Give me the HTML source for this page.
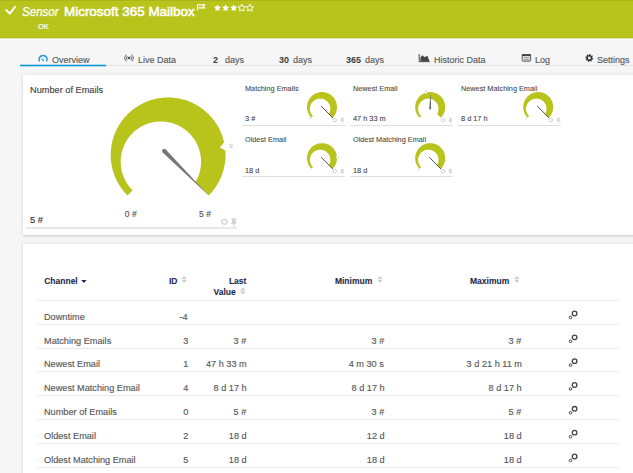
<!DOCTYPE html>
<html><head><meta charset="utf-8"><style>
html,body{margin:0;padding:0;}
body{width:633px;height:473px;overflow:hidden;position:relative;background:#f6f6f6;font-family:"Liberation Sans",sans-serif;}
.t{position:absolute;white-space:nowrap;}
.t{-webkit-text-stroke:0.15px currentColor;}
svg{position:absolute;left:0;top:0;}
</style></head><body>
<div style="position:absolute;left:0px;top:0px;width:633px;height:38px;background:#b8c41c;"></div>
<div style="position:absolute;left:0px;top:0px;width:633px;height:1px;background:#abb61a;"></div>
<div style="position:absolute;left:0px;top:37px;width:633px;height:1px;background:#b3be12;"></div>
<div style="position:absolute;left:0px;top:38px;width:633px;height:1px;background:#e2e6bd;"></div>
<div style="position:absolute;left:0px;top:39px;width:633px;height:1px;background:#fafafa;"></div>
<div class="t" style="left:21.70px;top:4.96px;font-size:12.3px;line-height:14.76px;color:#fff;font-weight:normal;font-style:italic;transform:scaleX(0.94);transform-origin:left 50%;-webkit-text-stroke:0.25px #fff;">Sensor</div>
<div class="t" style="left:64.00px;top:3.97px;font-size:13.45px;line-height:16.14px;color:#fff;font-weight:normal;font-style:normal;-webkit-text-stroke:0.55px #fff;">Microsoft 365 Mailbox</div>
<div class="t" style="left:37.70px;top:22.13px;font-size:8px;line-height:9.6px;color:#fff;font-weight:normal;font-style:normal;transform:scaleX(0.93);transform-origin:left 50%;-webkit-text-stroke:0.2px #fff;">OK</div>
<div style="position:absolute;left:106px;top:65px;width:527px;height:1px;background:#e4e4e4;"></div>
<div class="t" style="left:51.70px;top:53.71px;font-size:9.5px;line-height:11.4px;color:#595959;font-weight:normal;font-style:normal;transform:scaleX(0.947);transform-origin:left 50%;">Overview</div>
<div class="t" style="left:137.70px;top:53.71px;font-size:9.5px;line-height:11.4px;color:#595959;font-weight:normal;font-style:normal;transform:scaleX(0.947);transform-origin:left 50%;">Live Data</div>
<div class="t" style="left:212.90px;top:53.81px;font-size:9.5px;line-height:11.4px;color:#3a3a3a;font-weight:bold;font-style:normal;transform:scaleX(0.94);transform-origin:left 50%;-webkit-text-stroke:0;">2</div>
<div class="t" style="left:224.60px;top:53.71px;font-size:9.5px;line-height:11.4px;color:#595959;font-weight:normal;font-style:normal;transform:scaleX(0.947);transform-origin:left 50%;">days</div>
<div class="t" style="left:278.80px;top:53.81px;font-size:9.5px;line-height:11.4px;color:#3a3a3a;font-weight:bold;font-style:normal;transform:scaleX(0.94);transform-origin:left 50%;-webkit-text-stroke:0;">30</div>
<div class="t" style="left:292.70px;top:53.71px;font-size:9.5px;line-height:11.4px;color:#595959;font-weight:normal;font-style:normal;transform:scaleX(0.947);transform-origin:left 50%;">days</div>
<div class="t" style="left:346.30px;top:53.81px;font-size:9.5px;line-height:11.4px;color:#3a3a3a;font-weight:bold;font-style:normal;transform:scaleX(0.94);transform-origin:left 50%;-webkit-text-stroke:0;">365</div>
<div class="t" style="left:364.60px;top:53.71px;font-size:9.5px;line-height:11.4px;color:#595959;font-weight:normal;font-style:normal;transform:scaleX(0.947);transform-origin:left 50%;">days</div>
<div class="t" style="left:433.80px;top:53.71px;font-size:9.5px;line-height:11.4px;color:#595959;font-weight:normal;font-style:normal;transform:scaleX(0.947);transform-origin:left 50%;">Historic Data</div>
<div class="t" style="left:534.70px;top:53.71px;font-size:9.5px;line-height:11.4px;color:#595959;font-weight:normal;font-style:normal;transform:scaleX(0.947);transform-origin:left 50%;">Log</div>
<div class="t" style="left:597.40px;top:53.71px;font-size:9.5px;line-height:11.4px;color:#595959;font-weight:normal;font-style:normal;transform:scaleX(0.947);transform-origin:left 50%;">Settings</div>
<div style="position:absolute;left:23px;top:75px;width:625px;height:160px;background:#fff;box-shadow:0 0 5px rgba(0,0,0,0.07), 0 1px 2px rgba(0,0,0,0.14);"></div>
<div class="t" style="left:29.70px;top:84.07px;font-size:9.75px;line-height:11.7px;color:#444;font-weight:normal;font-style:normal;transform:scaleX(0.944);transform-origin:left 50%;">Number of Emails</div>
<div class="t" style="left:124.80px;top:208.96px;font-size:8.6px;line-height:10.32px;color:#555;font-weight:normal;font-style:normal;">0 #</div>
<div class="t" style="left:199.10px;top:208.96px;font-size:8.6px;line-height:10.32px;color:#555;font-weight:normal;font-style:normal;">5 #</div>
<div class="t" style="left:30.00px;top:214.80px;font-size:9.3px;line-height:11.16px;color:#333;font-weight:normal;font-style:normal;">5 #</div>
<div style="position:absolute;left:26.3px;top:227px;width:211.2px;height:2px;background:#e8e8e8;"></div>
<div class="t" style="left:245.20px;top:84.22px;font-size:7.8px;line-height:9.36px;color:#454545;font-weight:normal;font-style:normal;transform:scaleX(0.936);transform-origin:left 50%;-webkit-text-stroke:0.08px #454545;">Matching Emails</div>
<div class="t" style="left:245.20px;top:113.93px;font-size:8.0px;line-height:9.6px;color:#3a3a3a;font-weight:normal;font-style:normal;transform:scaleX(0.92);transform-origin:left 50%;-webkit-text-stroke:0.08px #3a3a3a;">3 #</div>
<div style="position:absolute;left:241.5px;top:125px;width:103.7px;height:1px;background:#e0e0e0;"></div>
<div class="t" style="left:353.40px;top:84.22px;font-size:7.8px;line-height:9.36px;color:#454545;font-weight:normal;font-style:normal;transform:scaleX(0.936);transform-origin:left 50%;-webkit-text-stroke:0.08px #454545;">Newest Email</div>
<div class="t" style="left:353.40px;top:113.93px;font-size:8.0px;line-height:9.6px;color:#3a3a3a;font-weight:normal;font-style:normal;transform:scaleX(0.92);transform-origin:left 50%;-webkit-text-stroke:0.08px #3a3a3a;">47 h 33 m</div>
<div style="position:absolute;left:349.7px;top:125px;width:103.7px;height:1px;background:#e0e0e0;"></div>
<div class="t" style="left:461.40px;top:84.22px;font-size:7.8px;line-height:9.36px;color:#454545;font-weight:normal;font-style:normal;transform:scaleX(0.936);transform-origin:left 50%;-webkit-text-stroke:0.08px #454545;">Newest Matching Email</div>
<div class="t" style="left:461.40px;top:113.93px;font-size:8.0px;line-height:9.6px;color:#3a3a3a;font-weight:normal;font-style:normal;transform:scaleX(0.92);transform-origin:left 50%;-webkit-text-stroke:0.08px #3a3a3a;">8 d 17 h</div>
<div style="position:absolute;left:457.7px;top:125px;width:103.7px;height:1px;background:#e0e0e0;"></div>
<div class="t" style="left:245.20px;top:135.32px;font-size:7.8px;line-height:9.36px;color:#454545;font-weight:normal;font-style:normal;transform:scaleX(0.936);transform-origin:left 50%;-webkit-text-stroke:0.08px #454545;">Oldest Email</div>
<div class="t" style="left:245.20px;top:165.63px;font-size:8.0px;line-height:9.6px;color:#3a3a3a;font-weight:normal;font-style:normal;transform:scaleX(0.92);transform-origin:left 50%;-webkit-text-stroke:0.08px #3a3a3a;">18 d</div>
<div style="position:absolute;left:241.5px;top:176px;width:103.7px;height:1px;background:#e0e0e0;"></div>
<div class="t" style="left:353.40px;top:135.32px;font-size:7.8px;line-height:9.36px;color:#454545;font-weight:normal;font-style:normal;transform:scaleX(0.936);transform-origin:left 50%;-webkit-text-stroke:0.08px #454545;">Oldest Matching Email</div>
<div class="t" style="left:353.40px;top:165.63px;font-size:8.0px;line-height:9.6px;color:#3a3a3a;font-weight:normal;font-style:normal;transform:scaleX(0.92);transform-origin:left 50%;-webkit-text-stroke:0.08px #3a3a3a;">18 d</div>
<div style="position:absolute;left:349.7px;top:176px;width:103.7px;height:1px;background:#e0e0e0;"></div>
<div style="position:absolute;left:23px;top:244px;width:625px;height:240px;background:#fff;box-shadow:0 0 5px rgba(0,0,0,0.07), 0 1px 2px rgba(0,0,0,0.14);"></div>
<div class="t" style="left:44.20px;top:275.95px;font-size:8.5px;line-height:10.2px;color:#1c2a4e;font-weight:bold;font-style:normal;-webkit-text-stroke:0.08px #1c2a4e;">Channel</div>
<div class="t" style="right:455.50px;top:276.05px;font-size:8.5px;line-height:10.2px;color:#1c2a4e;font-weight:bold;font-style:normal;-webkit-text-stroke:0.08px #1c2a4e;">ID</div>
<div class="t" style="right:386.60px;top:276.05px;font-size:8.5px;line-height:10.2px;color:#1c2a4e;font-weight:bold;font-style:normal;-webkit-text-stroke:0.08px #1c2a4e;">Last</div>
<div class="t" style="right:397.30px;top:287.35px;font-size:8.5px;line-height:10.2px;color:#1c2a4e;font-weight:bold;font-style:normal;-webkit-text-stroke:0.08px #1c2a4e;">Value</div>
<div class="t" style="left:334.90px;top:276.05px;font-size:8.5px;line-height:10.2px;color:#1c2a4e;font-weight:bold;font-style:normal;-webkit-text-stroke:0.08px #1c2a4e;">Minimum</div>
<div class="t" style="left:470.00px;top:276.05px;font-size:8.5px;line-height:10.2px;color:#1c2a4e;font-weight:bold;font-style:normal;-webkit-text-stroke:0.08px #1c2a4e;">Maximum</div>
<div style="position:absolute;left:36.8px;top:300px;width:582.7px;height:1px;background:#e9e9e9;"></div>
<div style="position:absolute;left:36.8px;top:324px;width:582.7px;height:1px;background:#e9e9e9;"></div>
<div style="position:absolute;left:36.8px;top:348px;width:582.7px;height:1px;background:#e9e9e9;"></div>
<div style="position:absolute;left:36.8px;top:371px;width:582.7px;height:1px;background:#e9e9e9;"></div>
<div style="position:absolute;left:36.8px;top:395px;width:582.7px;height:1px;background:#e9e9e9;"></div>
<div style="position:absolute;left:36.8px;top:419px;width:582.7px;height:1px;background:#e9e9e9;"></div>
<div style="position:absolute;left:36.8px;top:443px;width:582.7px;height:1px;background:#e9e9e9;"></div>
<div style="position:absolute;left:36.8px;top:467px;width:582.7px;height:1px;background:#e9e9e9;"></div>
<div class="t" style="left:43.90px;top:310.71px;font-size:9.6px;line-height:11.52px;color:#585858;font-weight:normal;font-style:normal;transform:scaleX(0.955);transform-origin:left 50%;">Downtime</div>
<div class="t" style="right:445.10px;top:310.71px;font-size:9.6px;line-height:11.52px;color:#585858;font-weight:normal;font-style:normal;transform:scaleX(0.955);transform-origin:right 50%;">-4</div>
<div class="t" style="left:43.90px;top:334.54px;font-size:9.6px;line-height:11.52px;color:#585858;font-weight:normal;font-style:normal;transform:scaleX(0.955);transform-origin:left 50%;">Matching Emails</div>
<div class="t" style="right:445.10px;top:334.54px;font-size:9.6px;line-height:11.52px;color:#585858;font-weight:normal;font-style:normal;transform:scaleX(0.955);transform-origin:right 50%;">3</div>
<div class="t" style="right:386.70px;top:334.54px;font-size:9.6px;line-height:11.52px;color:#585858;font-weight:normal;font-style:normal;transform:scaleX(0.955);transform-origin:right 50%;">3 #</div>
<div class="t" style="right:248.80px;top:334.54px;font-size:9.6px;line-height:11.52px;color:#585858;font-weight:normal;font-style:normal;transform:scaleX(0.955);transform-origin:right 50%;">3 #</div>
<div class="t" style="right:111.30px;top:334.54px;font-size:9.6px;line-height:11.52px;color:#585858;font-weight:normal;font-style:normal;transform:scaleX(0.955);transform-origin:right 50%;">3 #</div>
<div class="t" style="left:43.90px;top:358.37px;font-size:9.6px;line-height:11.52px;color:#585858;font-weight:normal;font-style:normal;transform:scaleX(0.955);transform-origin:left 50%;">Newest Email</div>
<div class="t" style="right:445.10px;top:358.37px;font-size:9.6px;line-height:11.52px;color:#585858;font-weight:normal;font-style:normal;transform:scaleX(0.955);transform-origin:right 50%;">1</div>
<div class="t" style="right:386.70px;top:358.37px;font-size:9.6px;line-height:11.52px;color:#585858;font-weight:normal;font-style:normal;transform:scaleX(0.955);transform-origin:right 50%;">47 h 33 m</div>
<div class="t" style="right:248.80px;top:358.37px;font-size:9.6px;line-height:11.52px;color:#585858;font-weight:normal;font-style:normal;transform:scaleX(0.955);transform-origin:right 50%;">4 m 30 s</div>
<div class="t" style="right:111.30px;top:358.37px;font-size:9.6px;line-height:11.52px;color:#585858;font-weight:normal;font-style:normal;transform:scaleX(0.955);transform-origin:right 50%;">3 d 21 h 11 m</div>
<div class="t" style="left:43.90px;top:382.20px;font-size:9.6px;line-height:11.52px;color:#585858;font-weight:normal;font-style:normal;transform:scaleX(0.955);transform-origin:left 50%;">Newest Matching Email</div>
<div class="t" style="right:445.10px;top:382.20px;font-size:9.6px;line-height:11.52px;color:#585858;font-weight:normal;font-style:normal;transform:scaleX(0.955);transform-origin:right 50%;">4</div>
<div class="t" style="right:386.70px;top:382.20px;font-size:9.6px;line-height:11.52px;color:#585858;font-weight:normal;font-style:normal;transform:scaleX(0.955);transform-origin:right 50%;">8 d 17 h</div>
<div class="t" style="right:248.80px;top:382.20px;font-size:9.6px;line-height:11.52px;color:#585858;font-weight:normal;font-style:normal;transform:scaleX(0.955);transform-origin:right 50%;">8 d 17 h</div>
<div class="t" style="right:111.30px;top:382.20px;font-size:9.6px;line-height:11.52px;color:#585858;font-weight:normal;font-style:normal;transform:scaleX(0.955);transform-origin:right 50%;">8 d 17 h</div>
<div class="t" style="left:43.90px;top:406.03px;font-size:9.6px;line-height:11.52px;color:#585858;font-weight:normal;font-style:normal;transform:scaleX(0.955);transform-origin:left 50%;">Number of Emails</div>
<div class="t" style="right:445.10px;top:406.03px;font-size:9.6px;line-height:11.52px;color:#585858;font-weight:normal;font-style:normal;transform:scaleX(0.955);transform-origin:right 50%;">0</div>
<div class="t" style="right:386.70px;top:406.03px;font-size:9.6px;line-height:11.52px;color:#585858;font-weight:normal;font-style:normal;transform:scaleX(0.955);transform-origin:right 50%;">5 #</div>
<div class="t" style="right:248.80px;top:406.03px;font-size:9.6px;line-height:11.52px;color:#585858;font-weight:normal;font-style:normal;transform:scaleX(0.955);transform-origin:right 50%;">3 #</div>
<div class="t" style="right:111.30px;top:406.03px;font-size:9.6px;line-height:11.52px;color:#585858;font-weight:normal;font-style:normal;transform:scaleX(0.955);transform-origin:right 50%;">5 #</div>
<div class="t" style="left:43.90px;top:429.86px;font-size:9.6px;line-height:11.52px;color:#585858;font-weight:normal;font-style:normal;transform:scaleX(0.955);transform-origin:left 50%;">Oldest Email</div>
<div class="t" style="right:445.10px;top:429.86px;font-size:9.6px;line-height:11.52px;color:#585858;font-weight:normal;font-style:normal;transform:scaleX(0.955);transform-origin:right 50%;">2</div>
<div class="t" style="right:386.70px;top:429.86px;font-size:9.6px;line-height:11.52px;color:#585858;font-weight:normal;font-style:normal;transform:scaleX(0.955);transform-origin:right 50%;">18 d</div>
<div class="t" style="right:248.80px;top:429.86px;font-size:9.6px;line-height:11.52px;color:#585858;font-weight:normal;font-style:normal;transform:scaleX(0.955);transform-origin:right 50%;">12 d</div>
<div class="t" style="right:111.30px;top:429.86px;font-size:9.6px;line-height:11.52px;color:#585858;font-weight:normal;font-style:normal;transform:scaleX(0.955);transform-origin:right 50%;">18 d</div>
<div class="t" style="left:43.90px;top:453.69px;font-size:9.6px;line-height:11.52px;color:#585858;font-weight:normal;font-style:normal;transform:scaleX(0.955);transform-origin:left 50%;">Oldest Matching Email</div>
<div class="t" style="right:445.10px;top:453.69px;font-size:9.6px;line-height:11.52px;color:#585858;font-weight:normal;font-style:normal;transform:scaleX(0.955);transform-origin:right 50%;">5</div>
<div class="t" style="right:386.70px;top:453.69px;font-size:9.6px;line-height:11.52px;color:#585858;font-weight:normal;font-style:normal;transform:scaleX(0.955);transform-origin:right 50%;">18 d</div>
<div class="t" style="right:248.80px;top:453.69px;font-size:9.6px;line-height:11.52px;color:#585858;font-weight:normal;font-style:normal;transform:scaleX(0.955);transform-origin:right 50%;">18 d</div>
<div class="t" style="right:111.30px;top:453.69px;font-size:9.6px;line-height:11.52px;color:#585858;font-weight:normal;font-style:normal;transform:scaleX(0.955);transform-origin:right 50%;">18 d</div>
<svg width="633" height="473" viewBox="0 0 633 473">
<path d="M6.2,10 L9.8,13.6 L15.1,6.75" fill="none" stroke="#fff" stroke-width="1.9" stroke-linecap="round" stroke-linejoin="round"/>
<path d="M197.5,10.6 V4.5 M197.5,4.9 H204.6 L203.3,6.4 L204.6,7.9 H197.5" fill="none" stroke="#fff" stroke-width="1.15"/>
<path d="M217.50,4.20 L218.62,6.46 L221.11,6.83 L219.31,8.59 L219.73,11.07 L217.50,9.90 L215.27,11.07 L215.69,8.59 L213.89,6.83 L216.38,6.46Z" fill="#fff"/>
<path d="M225.60,4.20 L226.72,6.46 L229.21,6.83 L227.41,8.59 L227.83,11.07 L225.60,9.90 L223.37,11.07 L223.79,8.59 L221.99,6.83 L224.48,6.46Z" fill="#fff"/>
<path d="M233.70,4.20 L234.82,6.46 L237.31,6.83 L235.51,8.59 L235.93,11.07 L233.70,9.90 L231.47,11.07 L231.89,8.59 L230.09,6.83 L232.58,6.46Z" fill="#fff"/>
<path d="M241.80,4.20 L242.92,6.46 L245.41,6.83 L243.61,8.59 L244.03,11.07 L241.80,9.90 L239.57,11.07 L239.99,8.59 L238.19,6.83 L240.68,6.46Z" fill="none" stroke="#fff" stroke-width="1.0" stroke-linejoin="round"/>
<path d="M249.90,4.20 L251.02,6.46 L253.51,6.83 L251.71,8.59 L252.13,11.07 L249.90,9.90 L247.67,11.07 L248.09,8.59 L246.29,6.83 L248.78,6.46Z" fill="none" stroke="#fff" stroke-width="1.0" stroke-linejoin="round"/>
<rect x="20" y="64.7" width="86" height="1.6" fill="#0c96d6"/>
<path d="M39.5,61.5 A4.1,4.1 0 1 1 46.7,61.5" fill="none" stroke="#1a9ad6" stroke-width="1.5"/>
<line x1="41.5" y1="58.8" x2="43.9" y2="60.8" stroke="#1a9ad6" stroke-width="1.2"/>
<circle cx="129" cy="58" r="1.15" fill="#444"/>
<path d="M127.4,56.1 A2.6,2.6 0 0 0 127.4,59.9 M130.6,56.1 A2.6,2.6 0 0 1 130.6,59.9" fill="none" stroke="#555" stroke-width="0.9"/>
<path d="M126.4,54.6 A4.3,4.3 0 0 0 126.4,61.4 M131.6,54.6 A4.3,4.3 0 0 1 131.6,61.4" fill="none" stroke="#555" stroke-width="0.9"/>
<path d="M419.2,54 V61.7 H429.8" fill="none" stroke="#444" stroke-width="1"/>
<path d="M420.4,61.2 L420.4,57.5 L422.4,55.2 L424.6,57.2 L425.6,56.6 L427.5,56 L429.5,61.2 Z" fill="#444"/>
<rect x="522.2" y="54.6" width="8.4" height="6.6" fill="#dcdcdc" stroke="#5a5a5a" stroke-width="1" rx="0.6"/>
<rect x="522" y="54.2" width="8.8" height="1.8" fill="#444"/>
<path d="M524,57.6 H528.8 M524,59.5 H528.8" stroke="#8a8a8a" stroke-width="0.8"/>
<path d="M593.38,58.40 L593.22,59.19 L591.90,59.39 L591.58,59.87 L591.90,61.17 L591.23,61.62 L590.16,60.82 L589.59,60.94 L588.90,62.08 L588.11,61.92 L587.91,60.60 L587.43,60.28 L586.13,60.60 L585.68,59.93 L586.48,58.86 L586.36,58.29 L585.22,57.60 L585.38,56.81 L586.70,56.61 L587.02,56.13 L586.70,54.83 L587.37,54.38 L588.44,55.18 L589.01,55.06 L589.70,53.92 L590.49,54.08 L590.69,55.40 L591.17,55.72 L592.47,55.40 L592.92,56.07 L592.12,57.14 L592.24,57.71Z M590.73,58.00 A1.43,1.43 0 1 0 587.87,58.00 A1.43,1.43 0 1 0 590.73,58.00Z" fill="#333" fill-rule="evenodd"/>
<path d="M127.51,195.49 L126.98,194.95 L126.46,194.41 L125.95,193.86 L125.44,193.31 L124.94,192.75 L124.45,192.18 L123.97,191.60 L123.49,191.02 L123.02,190.44 L122.56,189.84 L122.11,189.24 L121.66,188.64 L121.22,188.03 L120.80,187.41 L120.37,186.79 L119.96,186.16 L119.56,185.53 L119.16,184.89 L118.77,184.25 L118.39,183.60 L118.02,182.95 L117.66,182.29 L117.30,181.63 L116.96,180.96 L116.62,180.29 L116.29,179.61 L115.97,178.93 L115.66,178.25 L115.36,177.56 L115.07,176.87 L114.79,176.17 L114.51,175.47 L114.25,174.77 L113.99,174.06 L113.75,173.35 L113.51,172.64 L113.28,171.92 L113.06,171.20 L112.86,170.48 L112.66,169.76 L112.47,169.03 L112.29,168.30 L112.12,167.57 L111.95,166.83 L111.80,166.10 L111.66,165.36 L111.53,164.62 L111.41,163.88 L111.29,163.14 L111.19,162.39 L111.10,161.65 L111.01,160.90 L110.94,160.15 L110.88,159.40 L110.82,158.65 L110.78,157.90 L110.74,157.15 L110.72,156.40 L110.70,155.65 L110.70,154.90 L110.70,154.15 L110.72,153.40 L110.74,152.65 L110.78,151.90 L110.82,151.15 L110.88,150.40 L110.94,149.65 L111.01,148.90 L111.10,148.15 L111.19,147.41 L111.29,146.66 L111.41,145.92 L111.53,145.18 L111.66,144.44 L111.80,143.70 L111.95,142.97 L112.12,142.23 L112.29,141.50 L112.47,140.77 L112.66,140.04 L112.86,139.32 L113.06,138.60 L113.28,137.88 L113.51,137.16 L113.75,136.45 L113.99,135.74 L114.25,135.03 L114.51,134.33 L114.79,133.63 L115.07,132.93 L115.36,132.24 L115.66,131.55 L115.97,130.87 L116.29,130.19 L116.62,129.51 L116.96,128.84 L117.30,128.17 L117.66,127.51 L118.02,126.85 L118.39,126.20 L118.77,125.55 L119.16,124.91 L119.56,124.27 L119.96,123.64 L120.37,123.01 L120.80,122.39 L121.22,121.77 L121.66,121.16 L122.11,120.56 L122.56,119.96 L123.02,119.36 L123.49,118.78 L123.97,118.20 L124.45,117.62 L124.94,117.05 L125.44,116.49 L125.95,115.94 L126.46,115.39 L126.98,114.85 L127.51,114.31 L128.05,113.78 L128.59,113.26 L129.14,112.75 L129.69,112.24 L130.25,111.74 L130.82,111.25 L131.40,110.77 L131.98,110.29 L132.56,109.82 L133.16,109.36 L133.76,108.91 L134.36,108.46 L134.97,108.02 L135.59,107.60 L136.21,107.17 L136.84,106.76 L137.47,106.36 L138.11,105.96 L138.75,105.57 L139.40,105.19 L140.05,104.82 L140.71,104.46 L141.37,104.10 L142.04,103.76 L142.71,103.42 L143.39,103.09 L144.07,102.77 L144.75,102.46 L145.44,102.16 L146.13,101.87 L146.83,101.59 L147.53,101.31 L148.23,101.05 L148.94,100.79 L149.65,100.55 L150.36,100.31 L151.08,100.08 L151.80,99.86 L152.52,99.66 L153.24,99.46 L153.97,99.27 L154.70,99.09 L155.43,98.92 L156.17,98.75 L156.90,98.60 L157.64,98.46 L158.38,98.33 L159.12,98.21 L159.86,98.09 L160.61,97.99 L161.35,97.90 L162.10,97.81 L162.85,97.74 L163.60,97.68 L164.35,97.62 L165.10,97.58 L165.85,97.54 L166.60,97.52 L167.35,97.50 L168.10,97.50 L168.85,97.50 L169.60,97.52 L170.35,97.54 L171.10,97.58 L171.85,97.62 L172.60,97.68 L173.35,97.74 L174.10,97.81 L174.85,97.90 L175.59,97.99 L176.34,98.09 L177.08,98.21 L177.82,98.33 L178.56,98.46 L179.30,98.60 L180.03,98.75 L180.77,98.92 L181.50,99.09 L182.23,99.27 L182.96,99.46 L183.68,99.66 L184.40,99.86 L185.12,100.08 L185.84,100.31 L186.55,100.55 L187.26,100.79 L187.97,101.05 L188.67,101.31 L189.37,101.59 L190.07,101.87 L190.76,102.16 L191.45,102.46 L192.13,102.77 L192.81,103.09 L193.49,103.42 L194.16,103.76 L194.83,104.10 L195.49,104.46 L196.15,104.82 L196.80,105.19 L197.45,105.57 L198.09,105.96 L198.73,106.36 L199.36,106.76 L199.99,107.17 L200.61,107.60 L201.23,108.02 L201.84,108.46 L202.44,108.91 L203.04,109.36 L203.64,109.82 L204.22,110.29 L204.80,110.77 L205.38,111.25 L205.95,111.74 L206.51,112.24 L207.06,112.75 L207.61,113.26 L208.15,113.78 L208.69,114.31 L209.22,114.85 L209.74,115.39 L210.25,115.94 L210.76,116.49 L211.26,117.05 L211.75,117.62 L212.23,118.20 L212.71,118.78 L213.18,119.36 L213.64,119.96 L214.09,120.56 L214.54,121.16 L214.98,121.77 L215.40,122.39 L215.83,123.01 L216.24,123.64 L216.64,124.27 L217.04,124.91 L217.43,125.55 L217.81,126.20 L218.18,126.85 L218.54,127.51 L218.90,128.17 L219.24,128.84 L219.58,129.51 L219.91,130.19 L220.23,130.87 L220.54,131.55 L220.84,132.24 L221.13,132.93 L221.41,133.63 L221.69,134.33 L221.95,135.03 L222.21,135.74 L222.45,136.45 L222.69,137.16 L222.92,137.88 L223.14,138.60 L223.34,139.32 L223.54,140.04 L223.73,140.77 L223.91,141.50 L224.08,142.23 L223.52,143.12 L222.76,144.03 L221.98,144.91 L221.19,145.78 L220.39,146.62 L219.94,147.38 L220.96,147.94 L221.97,148.52 L222.97,149.13 L223.96,149.77 L224.95,150.43 L225.38,151.15 L225.42,151.90 L225.46,152.65 L225.48,153.40 L225.50,154.15 L225.50,154.90 L225.50,155.65 L225.48,156.40 L225.46,157.15 L225.42,157.90 L225.38,158.65 L225.32,159.40 L225.26,160.15 L225.19,160.90 L225.10,161.65 L225.01,162.39 L224.91,163.14 L224.79,163.88 L224.67,164.62 L224.54,165.36 L224.40,166.10 L224.25,166.83 L224.08,167.57 L223.91,168.30 L223.73,169.03 L223.54,169.76 L223.34,170.48 L223.14,171.20 L222.92,171.92 L222.69,172.64 L222.45,173.35 L222.21,174.06 L221.95,174.77 L221.69,175.47 L221.41,176.17 L221.13,176.87 L220.84,177.56 L220.54,178.25 L220.23,178.93 L219.91,179.61 L219.58,180.29 L219.24,180.96 L218.90,181.63 L218.54,182.29 L218.18,182.95 L217.81,183.60 L217.43,184.25 L217.04,184.89 L216.64,185.53 L216.24,186.16 L215.83,186.79 L215.40,187.41 L214.98,188.03 L214.54,188.64 L214.09,189.24 L213.64,189.84 L213.18,190.44 L212.71,191.02 L212.23,191.60 L211.75,192.18 L211.26,192.75 L210.76,193.31 L210.25,193.86 L209.74,194.41 L209.22,194.95 L208.69,195.49 L195.41,182.21 L195.67,181.76 L195.93,181.30 L196.17,180.85 L196.42,180.40 L196.65,179.94 L196.88,179.48 L197.11,179.03 L197.32,178.57 L197.53,178.10 L197.74,177.64 L197.94,177.18 L198.13,176.72 L198.31,176.25 L198.49,175.79 L198.66,175.32 L198.82,174.85 L198.98,174.39 L199.14,173.92 L199.28,173.45 L199.42,172.98 L199.56,172.52 L199.68,172.05 L199.81,171.58 L199.92,171.11 L200.03,170.65 L200.14,170.18 L200.23,169.71 L200.33,169.25 L200.41,168.78 L200.49,168.32 L200.57,167.85 L200.64,167.39 L200.70,166.93 L200.76,166.47 L200.81,166.00 L200.86,165.54 L200.90,165.09 L200.94,164.63 L200.97,164.17 L201.00,163.71 L201.02,163.26 L201.03,162.81 L201.04,162.35 L201.05,161.90 L201.05,161.45 L201.04,161.01 L201.03,160.56 L201.02,160.11 L201.00,159.67 L200.97,159.23 L200.94,158.79 L200.91,158.35 L200.87,157.91 L200.83,157.48 L200.78,157.04 L200.73,156.61 L200.67,156.18 L200.61,155.75 L200.54,155.32 L200.47,154.90 L200.40,154.48 L200.32,154.06 L200.24,153.64 L200.15,153.22 L200.06,152.81 L199.96,152.39 L199.86,151.98 L199.76,151.57 L199.65,151.17 L199.54,150.76 L199.42,150.36 L199.30,149.96 L199.18,149.56 L199.05,149.16 L198.92,148.77 L198.78,148.38 L198.65,147.99 L198.50,147.60 L198.36,147.22 L198.21,146.83 L198.05,146.45 L197.90,146.07 L197.74,145.70 L197.57,145.32 L197.40,144.95 L197.23,144.58 L197.06,144.22 L196.88,143.85 L196.70,143.49 L196.51,143.13 L196.33,142.77 L196.13,142.42 L195.94,142.07 L195.74,141.72 L195.54,141.37 L195.34,141.02 L195.13,140.68 L194.92,140.34 L194.70,140.00 L194.49,139.67 L194.26,139.33 L194.04,139.00 L193.81,138.68 L193.59,138.35 L193.35,138.03 L193.12,137.71 L192.88,137.39 L192.64,137.07 L192.39,136.76 L192.14,136.45 L191.89,136.14 L191.64,135.84 L191.38,135.54 L191.12,135.24 L190.86,134.94 L190.60,134.64 L190.33,134.35 L190.06,134.06 L189.78,133.78 L189.51,133.49 L189.23,133.21 L188.95,132.93 L188.66,132.66 L188.37,132.38 L188.08,132.11 L187.79,131.85 L187.49,131.58 L187.19,131.32 L186.89,131.06 L186.59,130.80 L186.28,130.55 L185.97,130.30 L185.66,130.05 L185.34,129.81 L185.03,129.57 L184.71,129.33 L184.38,129.09 L184.06,128.86 L183.73,128.63 L183.40,128.40 L183.06,128.18 L182.73,127.96 L182.39,127.74 L182.05,127.53 L181.70,127.32 L181.36,127.11 L181.01,126.90 L180.65,126.70 L180.30,126.50 L179.94,126.31 L179.58,126.12 L179.22,125.93 L178.86,125.74 L178.49,125.56 L178.12,125.39 L177.75,125.21 L177.37,125.04 L176.99,124.87 L176.62,124.71 L176.23,124.55 L175.85,124.39 L175.46,124.24 L175.07,124.09 L174.68,123.94 L174.29,123.80 L173.89,123.66 L173.49,123.53 L173.09,123.40 L172.69,123.27 L172.28,123.15 L171.87,123.03 L171.46,122.92 L171.05,122.80 L170.63,122.70 L170.22,122.60 L169.80,122.50 L169.38,122.40 L168.95,122.32 L168.53,122.23 L168.10,122.15 L167.67,122.07 L167.24,122.00 L166.80,121.93 L166.37,121.87 L165.93,121.81 L165.49,121.76 L165.05,121.71 L164.61,121.67 L164.16,121.63 L163.72,121.59 L163.27,121.56 L162.82,121.54 L162.36,121.52 L161.91,121.51 L161.46,121.50 L161.00,121.49 L160.54,121.49 L160.08,121.50 L159.62,121.51 L159.16,121.53 L158.69,121.55 L158.23,121.58 L157.76,121.61 L157.30,121.65 L156.83,121.70 L156.36,121.75 L155.89,121.80 L155.42,121.86 L154.95,121.93 L154.47,122.01 L154.00,122.08 L153.53,122.17 L153.05,122.26 L152.58,122.36 L152.10,122.46 L151.63,122.57 L151.15,122.69 L150.68,122.81 L150.20,122.94 L149.72,123.07 L149.25,123.21 L148.77,123.36 L148.29,123.51 L147.82,123.67 L147.34,123.84 L146.87,124.01 L146.40,124.19 L145.92,124.38 L145.45,124.57 L144.98,124.77 L144.51,124.97 L144.04,125.19 L143.57,125.41 L143.10,125.63 L142.64,125.87 L142.17,126.11 L141.71,126.35 L141.25,126.61 L140.79,126.87 L140.34,127.14 L139.88,127.41 L139.43,127.69 L138.98,127.98 L138.53,128.27 L138.08,128.58 L137.64,128.89 L137.20,129.20 L136.76,129.53 L136.33,129.86 L135.90,130.19 L135.47,130.54 L135.05,130.89 L134.63,131.24 L134.21,131.61 L133.80,131.98 L133.39,132.36 L132.98,132.74 L132.58,133.14 L132.19,133.53 L131.79,133.94 L131.41,134.35 L131.02,134.77 L130.65,135.19 L130.27,135.63 L129.91,136.06 L129.54,136.51 L129.19,136.96 L128.83,137.42 L128.49,137.88 L128.15,138.35 L127.81,138.83 L127.49,139.31 L127.16,139.80 L126.85,140.29 L126.54,140.79 L126.24,141.30 L125.94,141.81 L125.65,142.33 L125.37,142.85 L125.10,143.38 L124.83,143.91 L124.57,144.45 L124.31,144.99 L124.07,145.54 L123.83,146.09 L123.60,146.65 L123.38,147.22 L123.16,147.78 L122.96,148.35 L122.76,148.93 L122.57,149.51 L122.39,150.10 L122.22,150.68 L122.06,151.28 L121.90,151.87 L121.76,152.47 L121.62,153.07 L121.49,153.68 L121.37,154.29 L121.26,154.90 L121.16,155.51 L121.07,156.13 L120.99,156.75 L120.92,157.37 L120.86,158.00 L120.80,158.62 L120.76,159.25 L120.73,159.88 L120.70,160.51 L120.69,161.14 L120.69,161.77 L120.69,162.41 L120.71,163.04 L120.74,163.68 L120.77,164.31 L120.82,164.95 L120.88,165.59 L120.95,166.22 L121.02,166.86 L121.11,167.49 L121.21,168.12 L121.32,168.76 L121.44,169.39 L121.56,170.02 L121.70,170.65 L121.85,171.28 L122.01,171.90 L122.18,172.53 L122.36,173.15 L122.55,173.77 L122.75,174.38 L122.96,175.00 L123.18,175.61 L123.41,176.22 L123.65,176.82 L123.90,177.42 L124.16,178.02 L124.43,178.61 L124.71,179.20 L125.00,179.78 L125.30,180.36 L125.61,180.94 L125.93,181.51 L126.25,182.08 L126.59,182.64 L126.94,183.19 L127.29,183.74 L127.65,184.29 L128.03,184.82 L128.41,185.36 L128.80,185.88 L129.20,186.40 L129.61,186.92 L130.02,187.42 L130.45,187.92 L130.88,188.41 L131.32,188.90 L131.77,189.38 L132.22,189.85 L132.69,190.31Z" fill="#b8c41c"/>
<path d="M162.69,152.53 L208.69,195.49 L165.73,149.49Z" fill="#767676"/>
<circle cx="164.21" cy="151.01" r="2.15" fill="#767676"/>
<path d="M229.2,144.3 H232.9 M229.6,145.2 L232.5,148.6 M232.5,145.2 L229.6,148.6" stroke="#b4b4b4" stroke-width="0.6"/>
<circle cx="224.4" cy="221.8" r="2.6" fill="none" stroke="#cfcfcf" stroke-width="1.4" stroke-dasharray="1.1 0.55"/>
<circle cx="224.4" cy="221.8" r="2.3000000000000003" fill="none" stroke="#cfcfcf" stroke-width="0.7"/>
<path transform="translate(231.3,218.4) scale(1.4)" d="M0,0 h3.6 v0.8 h-0.7 v1.4 l0.7,1 v0.6 h-1.4 v1.6 l-0.4,0.6 l-0.4,-0.6 v-1.6 h-1.4 v-0.6 l0.7,-1 v-1.4 h-0.7z" fill="#cfcfcf"/>
<path d="M311.39,117.66 L311.26,117.52 L311.12,117.38 L310.99,117.23 L310.85,117.09 L310.72,116.94 L310.59,116.79 L310.47,116.64 L310.34,116.49 L310.22,116.34 L310.10,116.18 L309.98,116.02 L309.86,115.87 L309.75,115.71 L309.64,115.55 L309.53,115.38 L309.42,115.22 L309.31,115.05 L309.21,114.89 L309.11,114.72 L309.01,114.55 L308.91,114.38 L308.82,114.21 L308.73,114.03 L308.63,113.86 L308.55,113.68 L308.46,113.51 L308.38,113.33 L308.30,113.15 L308.22,112.97 L308.14,112.79 L308.07,112.61 L308.00,112.43 L307.93,112.24 L307.86,112.06 L307.80,111.87 L307.73,111.69 L307.67,111.50 L307.62,111.31 L307.56,111.12 L307.51,110.93 L307.46,110.74 L307.41,110.55 L307.37,110.36 L307.33,110.17 L307.29,109.98 L307.25,109.78 L307.22,109.59 L307.18,109.40 L307.16,109.20 L307.13,109.01 L307.10,108.81 L307.08,108.62 L307.06,108.42 L307.05,108.23 L307.03,108.03 L307.02,107.84 L307.01,107.64 L307.01,107.44 L307.00,107.25 L307.00,107.05 L307.00,106.85 L307.01,106.66 L307.01,106.46 L307.02,106.26 L307.03,106.07 L307.05,105.87 L307.06,105.68 L307.08,105.48 L307.10,105.29 L307.13,105.09 L307.16,104.90 L307.18,104.70 L307.22,104.51 L307.25,104.32 L307.29,104.12 L307.33,103.93 L307.37,103.74 L307.41,103.55 L307.46,103.36 L307.51,103.17 L307.56,102.98 L307.62,102.79 L307.67,102.60 L307.73,102.41 L307.80,102.23 L307.86,102.04 L307.93,101.86 L308.00,101.67 L308.07,101.49 L308.14,101.31 L308.22,101.13 L308.30,100.95 L308.38,100.77 L308.46,100.59 L308.55,100.42 L308.63,100.24 L308.73,100.07 L308.82,99.89 L308.91,99.72 L309.01,99.55 L309.11,99.38 L309.21,99.21 L309.31,99.05 L309.42,98.88 L309.53,98.72 L309.64,98.55 L309.75,98.39 L309.86,98.23 L309.98,98.08 L310.10,97.92 L310.22,97.76 L310.34,97.61 L310.47,97.46 L310.59,97.31 L310.72,97.16 L310.85,97.01 L310.99,96.87 L311.12,96.72 L311.26,96.58 L311.39,96.44 L311.53,96.31 L311.67,96.17 L311.82,96.04 L311.96,95.90 L312.11,95.77 L312.26,95.64 L312.41,95.52 L312.56,95.39 L312.71,95.27 L312.87,95.15 L313.03,95.03 L313.18,94.91 L313.34,94.80 L313.50,94.69 L313.67,94.58 L313.83,94.47 L314.00,94.36 L314.16,94.26 L314.33,94.16 L314.50,94.06 L314.67,93.96 L314.84,93.87 L315.02,93.78 L315.19,93.68 L315.37,93.60 L315.54,93.51 L315.72,93.43 L315.90,93.35 L316.08,93.27 L316.26,93.19 L316.44,93.12 L316.62,93.05 L316.81,92.98 L316.99,92.91 L317.18,92.85 L317.36,92.78 L317.55,92.72 L317.74,92.67 L317.93,92.61 L318.12,92.56 L318.31,92.51 L318.50,92.46 L318.69,92.42 L318.88,92.38 L319.07,92.34 L319.27,92.30 L319.46,92.27 L319.65,92.23 L319.85,92.21 L320.04,92.18 L320.24,92.15 L320.43,92.13 L320.63,92.11 L320.82,92.10 L321.02,92.08 L321.21,92.07 L321.41,92.06 L321.61,92.06 L321.80,92.05 L322.00,92.05 L322.20,92.05 L322.39,92.06 L322.59,92.06 L322.79,92.07 L322.98,92.08 L323.18,92.10 L323.37,92.11 L323.57,92.13 L323.76,92.15 L323.96,92.18 L324.15,92.21 L324.35,92.23 L324.54,92.27 L324.73,92.30 L324.93,92.34 L325.12,92.38 L325.31,92.42 L325.50,92.46 L325.69,92.51 L325.88,92.56 L326.07,92.61 L326.26,92.67 L326.45,92.72 L326.64,92.78 L326.82,92.85 L327.01,92.91 L327.19,92.98 L327.38,93.05 L327.56,93.12 L327.74,93.19 L327.92,93.27 L328.10,93.35 L328.28,93.43 L328.46,93.51 L328.63,93.60 L328.81,93.68 L328.98,93.78 L329.16,93.87 L329.33,93.96 L329.50,94.06 L329.67,94.16 L329.84,94.26 L330.00,94.36 L330.17,94.47 L330.33,94.58 L330.50,94.69 L330.66,94.80 L330.82,94.91 L330.97,95.03 L331.13,95.15 L331.29,95.27 L331.44,95.39 L331.59,95.52 L331.74,95.64 L331.89,95.77 L332.04,95.90 L332.18,96.04 L332.33,96.17 L332.47,96.31 L332.61,96.44 L332.74,96.58 L332.88,96.72 L333.01,96.87 L333.15,97.01 L333.28,97.16 L333.41,97.31 L333.53,97.46 L333.66,97.61 L333.78,97.76 L333.90,97.92 L334.02,98.08 L334.14,98.23 L334.25,98.39 L334.36,98.55 L334.47,98.72 L334.58,98.88 L334.69,99.05 L334.79,99.21 L334.89,99.38 L334.99,99.55 L335.09,99.72 L335.18,99.89 L335.27,100.07 L335.37,100.24 L335.45,100.42 L335.54,100.59 L335.62,100.77 L335.70,100.95 L335.78,101.13 L335.86,101.31 L335.93,101.49 L336.00,101.67 L336.07,101.86 L336.14,102.04 L336.20,102.23 L336.27,102.41 L336.33,102.60 L336.38,102.79 L336.44,102.98 L336.49,103.17 L336.54,103.36 L336.59,103.55 L336.63,103.74 L336.67,103.93 L336.71,104.12 L336.75,104.32 L336.78,104.51 L336.82,104.70 L336.84,104.90 L336.87,105.09 L336.90,105.29 L336.92,105.48 L336.94,105.68 L336.95,105.87 L336.97,106.07 L336.98,106.26 L336.99,106.46 L336.99,106.66 L337.00,106.85 L337.00,107.05 L337.00,107.25 L336.99,107.44 L336.99,107.64 L336.98,107.84 L336.97,108.03 L336.95,108.23 L336.94,108.42 L336.92,108.62 L336.90,108.81 L336.87,109.01 L336.84,109.20 L336.82,109.40 L336.78,109.59 L336.75,109.78 L336.71,109.98 L336.67,110.17 L336.63,110.36 L336.59,110.55 L336.54,110.74 L336.49,110.93 L336.44,111.12 L336.38,111.31 L336.33,111.50 L336.27,111.69 L336.20,111.87 L336.14,112.06 L336.07,112.24 L336.00,112.43 L335.93,112.61 L335.86,112.79 L335.78,112.97 L335.70,113.15 L335.62,113.33 L335.54,113.51 L335.45,113.68 L335.37,113.86 L335.27,114.03 L335.18,114.21 L335.09,114.38 L334.99,114.55 L334.89,114.72 L334.79,114.89 L334.69,115.05 L334.58,115.22 L334.47,115.38 L334.36,115.55 L334.25,115.71 L334.14,115.87 L334.02,116.02 L333.90,116.18 L333.78,116.34 L333.66,116.49 L333.53,116.64 L333.41,116.79 L333.28,116.94 L333.15,117.09 L333.01,117.23 L332.88,117.38 L332.74,117.52 L332.61,117.66 L328.92,113.97 L328.98,113.85 L329.05,113.74 L329.11,113.62 L329.17,113.51 L329.23,113.39 L329.29,113.27 L329.34,113.16 L329.40,113.04 L329.45,112.92 L329.50,112.80 L329.55,112.69 L329.60,112.57 L329.64,112.45 L329.69,112.33 L329.73,112.21 L329.77,112.10 L329.81,111.98 L329.85,111.86 L329.88,111.74 L329.92,111.62 L329.95,111.50 L329.98,111.38 L330.01,111.27 L330.04,111.15 L330.07,111.03 L330.09,110.91 L330.12,110.79 L330.14,110.67 L330.16,110.56 L330.18,110.44 L330.20,110.32 L330.22,110.20 L330.23,110.09 L330.24,109.97 L330.26,109.85 L330.27,109.74 L330.28,109.62 L330.29,109.50 L330.29,109.39 L330.30,109.27 L330.30,109.16 L330.31,109.04 L330.31,108.93 L330.31,108.82 L330.31,108.70 L330.31,108.59 L330.30,108.48 L330.30,108.36 L330.29,108.25 L330.29,108.14 L330.28,108.03 L330.27,107.92 L330.26,107.81 L330.25,107.70 L330.24,107.59 L330.22,107.48 L330.21,107.37 L330.19,107.26 L330.17,107.16 L330.16,107.05 L330.14,106.94 L330.12,106.84 L330.09,106.73 L330.07,106.63 L330.05,106.52 L330.02,106.42 L330.00,106.32 L329.97,106.21 L329.94,106.11 L329.91,106.01 L329.89,105.91 L329.85,105.81 L329.82,105.71 L329.79,105.61 L329.76,105.51 L329.72,105.41 L329.69,105.31 L329.65,105.21 L329.61,105.12 L329.58,105.02 L329.54,104.92 L329.50,104.83 L329.46,104.73 L329.41,104.64 L329.37,104.55 L329.33,104.45 L329.28,104.36 L329.24,104.27 L329.19,104.18 L329.15,104.09 L329.10,104.00 L329.05,103.91 L329.00,103.82 L328.95,103.73 L328.90,103.65 L328.85,103.56 L328.80,103.47 L328.74,103.39 L328.69,103.30 L328.63,103.22 L328.58,103.14 L328.52,103.05 L328.47,102.97 L328.41,102.89 L328.35,102.81 L328.29,102.73 L328.23,102.65 L328.17,102.57 L328.11,102.49 L328.05,102.41 L327.98,102.33 L327.92,102.26 L327.85,102.18 L327.79,102.11 L327.72,102.03 L327.66,101.96 L327.59,101.88 L327.52,101.81 L327.45,101.74 L327.38,101.67 L327.31,101.60 L327.24,101.53 L327.17,101.46 L327.10,101.39 L327.02,101.32 L326.95,101.25 L326.88,101.19 L326.80,101.12 L326.73,101.06 L326.65,100.99 L326.57,100.93 L326.49,100.86 L326.42,100.80 L326.34,100.74 L326.26,100.68 L326.18,100.62 L326.09,100.56 L326.01,100.50 L325.93,100.44 L325.85,100.39 L325.76,100.33 L325.68,100.27 L325.59,100.22 L325.51,100.17 L325.42,100.11 L325.33,100.06 L325.25,100.01 L325.16,99.96 L325.07,99.91 L324.98,99.86 L324.89,99.81 L324.80,99.76 L324.71,99.71 L324.61,99.67 L324.52,99.62 L324.43,99.58 L324.33,99.54 L324.24,99.49 L324.14,99.45 L324.05,99.41 L323.95,99.37 L323.85,99.33 L323.76,99.29 L323.66,99.26 L323.56,99.22 L323.46,99.19 L323.36,99.15 L323.26,99.12 L323.15,99.09 L323.05,99.05 L322.95,99.02 L322.85,98.99 L322.74,98.97 L322.64,98.94 L322.53,98.91 L322.43,98.89 L322.32,98.86 L322.21,98.84 L322.11,98.82 L322.00,98.80 L321.89,98.78 L321.78,98.76 L321.67,98.74 L321.56,98.72 L321.45,98.71 L321.34,98.69 L321.23,98.68 L321.12,98.67 L321.01,98.66 L320.89,98.65 L320.78,98.64 L320.67,98.64 L320.55,98.63 L320.44,98.63 L320.32,98.62 L320.21,98.62 L320.09,98.62 L319.98,98.62 L319.86,98.62 L319.74,98.63 L319.63,98.63 L319.51,98.64 L319.39,98.65 L319.27,98.65 L319.15,98.66 L319.03,98.68 L318.92,98.69 L318.80,98.70 L318.68,98.72 L318.56,98.74 L318.44,98.76 L318.32,98.78 L318.20,98.80 L318.08,98.82 L317.96,98.85 L317.84,98.88 L317.71,98.91 L317.59,98.94 L317.47,98.97 L317.35,99.00 L317.23,99.03 L317.11,99.07 L316.99,99.11 L316.87,99.15 L316.75,99.19 L316.63,99.23 L316.51,99.28 L316.39,99.32 L316.27,99.37 L316.15,99.42 L316.03,99.47 L315.91,99.53 L315.79,99.58 L315.67,99.64 L315.55,99.70 L315.43,99.76 L315.31,99.82 L315.20,99.88 L315.08,99.95 L314.96,100.01 L314.85,100.08 L314.73,100.15 L314.62,100.23 L314.50,100.30 L314.39,100.38 L314.28,100.45 L314.16,100.53 L314.05,100.61 L313.94,100.70 L313.83,100.78 L313.72,100.87 L313.61,100.96 L313.51,101.05 L313.40,101.14 L313.29,101.23 L313.19,101.33 L313.08,101.42 L312.98,101.52 L312.88,101.62 L312.78,101.73 L312.68,101.83 L312.58,101.94 L312.49,102.04 L312.39,102.15 L312.30,102.26 L312.20,102.38 L312.11,102.49 L312.02,102.61 L311.93,102.72 L311.84,102.84 L311.76,102.96 L311.67,103.09 L311.59,103.21 L311.51,103.34 L311.43,103.46 L311.35,103.59 L311.28,103.72 L311.20,103.85 L311.13,103.98 L311.06,104.12 L310.99,104.25 L310.92,104.39 L310.86,104.53 L310.79,104.67 L310.73,104.81 L310.67,104.95 L310.62,105.09 L310.56,105.24 L310.51,105.38 L310.46,105.53 L310.41,105.68 L310.36,105.83 L310.31,105.98 L310.27,106.13 L310.23,106.28 L310.19,106.43 L310.16,106.58 L310.12,106.74 L310.09,106.89 L310.06,107.05 L310.04,107.21 L310.01,107.36 L309.99,107.52 L309.97,107.68 L309.96,107.84 L309.94,108.00 L309.93,108.16 L309.92,108.32 L309.92,108.48 L309.91,108.64 L309.91,108.80 L309.91,108.96 L309.91,109.13 L309.92,109.29 L309.93,109.45 L309.94,109.61 L309.95,109.78 L309.97,109.94 L309.99,110.10 L310.01,110.26 L310.04,110.42 L310.06,110.59 L310.09,110.75 L310.13,110.91 L310.16,111.07 L310.20,111.23 L310.24,111.39 L310.28,111.55 L310.33,111.71 L310.38,111.87 L310.43,112.02 L310.48,112.18 L310.53,112.34 L310.59,112.49 L310.65,112.65 L310.72,112.80 L310.78,112.95 L310.85,113.10 L310.92,113.25 L311.00,113.40 L311.07,113.55 L311.15,113.70 L311.23,113.84 L311.32,113.99 L311.40,114.13 L311.49,114.27 L311.58,114.41 L311.67,114.55 L311.77,114.69 L311.87,114.83 L311.97,114.96 L312.07,115.09 L312.17,115.22 L312.28,115.35 L312.39,115.48 L312.50,115.61 L312.61,115.73 L312.72,115.85 L312.84,115.97 L312.96,116.09Z" fill="#b8c41c"/>
<line x1="321.08" y1="106.13" x2="332.96" y2="118.01" stroke="#3a3a3a" stroke-width="0.9"/>
<circle cx="310.3" cy="118.4" r="0.7" fill="#bbb"/>
<circle cx="334.8" cy="120.1" r="1.9" fill="none" stroke="#d2d2d2" stroke-width="1.0" stroke-dasharray="1.1 0.55"/>
<circle cx="334.8" cy="120.1" r="1.5999999999999999" fill="none" stroke="#d2d2d2" stroke-width="0.7"/>
<path transform="translate(340.4,117.8) scale(1.0)" d="M0,0 h3.6 v0.8 h-0.7 v1.4 l0.7,1 v0.6 h-1.4 v1.6 l-0.4,0.6 l-0.4,-0.6 v-1.6 h-1.4 v-0.6 l0.7,-1 v-1.4 h-0.7z" fill="#d6d6d6"/>
<path d="M419.59,117.66 L419.46,117.52 L419.32,117.38 L419.19,117.23 L419.05,117.09 L418.92,116.94 L418.79,116.79 L418.67,116.64 L418.54,116.49 L418.42,116.34 L418.30,116.18 L418.18,116.02 L418.06,115.87 L417.95,115.71 L417.84,115.55 L417.73,115.38 L417.62,115.22 L417.51,115.05 L417.41,114.89 L417.31,114.72 L417.21,114.55 L417.11,114.38 L417.02,114.21 L416.93,114.03 L416.83,113.86 L416.75,113.68 L416.66,113.51 L416.58,113.33 L416.50,113.15 L416.42,112.97 L416.34,112.79 L416.27,112.61 L416.20,112.43 L416.13,112.24 L416.06,112.06 L416.00,111.87 L415.93,111.69 L415.87,111.50 L415.82,111.31 L415.76,111.12 L415.71,110.93 L415.66,110.74 L415.61,110.55 L415.57,110.36 L415.53,110.17 L415.49,109.98 L415.45,109.78 L415.42,109.59 L415.38,109.40 L415.36,109.20 L415.33,109.01 L415.30,108.81 L415.28,108.62 L415.26,108.42 L415.25,108.23 L415.23,108.03 L415.22,107.84 L415.21,107.64 L415.21,107.44 L415.20,107.25 L415.20,107.05 L415.20,106.85 L415.21,106.66 L415.21,106.46 L415.22,106.26 L415.23,106.07 L415.25,105.87 L415.26,105.68 L415.28,105.48 L415.30,105.29 L415.33,105.09 L415.36,104.90 L415.38,104.70 L415.42,104.51 L415.45,104.32 L415.49,104.12 L415.53,103.93 L415.57,103.74 L415.61,103.55 L415.66,103.36 L415.71,103.17 L415.76,102.98 L415.82,102.79 L415.87,102.60 L415.93,102.41 L416.00,102.23 L416.06,102.04 L416.13,101.86 L416.20,101.67 L416.27,101.49 L416.34,101.31 L416.42,101.13 L416.50,100.95 L416.58,100.77 L416.66,100.59 L416.75,100.42 L416.83,100.24 L416.93,100.07 L417.02,99.89 L417.11,99.72 L417.21,99.55 L417.31,99.38 L417.41,99.21 L417.51,99.05 L417.62,98.88 L417.73,98.72 L417.84,98.55 L417.95,98.39 L418.06,98.23 L418.18,98.08 L418.30,97.92 L418.42,97.76 L418.54,97.61 L418.67,97.46 L418.79,97.31 L418.92,97.16 L419.05,97.01 L419.19,96.87 L419.32,96.72 L419.46,96.58 L419.59,96.44 L419.73,96.31 L419.87,96.17 L420.02,96.04 L420.16,95.90 L420.31,95.77 L420.46,95.64 L420.61,95.52 L420.76,95.39 L420.91,95.27 L421.07,95.15 L421.23,95.03 L421.38,94.91 L421.54,94.80 L421.70,94.69 L421.87,94.58 L422.03,94.47 L422.20,94.36 L422.36,94.26 L422.53,94.16 L422.70,94.06 L422.87,93.96 L423.04,93.87 L423.22,93.78 L423.39,93.68 L423.57,93.60 L423.74,93.51 L423.92,93.43 L424.10,93.35 L424.28,93.27 L424.46,93.19 L424.64,93.12 L424.88,93.19 L425.14,93.34 L425.40,93.50 L425.65,93.66 L425.90,93.82 L426.14,93.99 L426.29,93.86 L426.40,93.59 L426.52,93.31 L426.64,93.04 L426.77,92.77 L426.91,92.50 L427.08,92.38 L427.27,92.34 L427.47,92.30 L427.66,92.27 L427.85,92.23 L428.05,92.21 L428.24,92.18 L428.44,92.15 L428.63,92.13 L428.83,92.11 L429.02,92.10 L429.22,92.08 L429.41,92.07 L429.61,92.06 L429.81,92.06 L430.00,92.05 L430.20,92.05 L430.40,92.05 L430.59,92.06 L430.79,92.06 L430.99,92.07 L431.18,92.08 L431.38,92.10 L431.57,92.11 L431.77,92.13 L431.96,92.15 L432.16,92.18 L432.35,92.21 L432.55,92.23 L432.74,92.27 L432.93,92.30 L433.13,92.34 L433.32,92.38 L433.51,92.42 L433.70,92.46 L433.89,92.51 L434.08,92.56 L434.27,92.61 L434.46,92.67 L434.65,92.72 L434.84,92.78 L435.02,92.85 L435.21,92.91 L435.39,92.98 L435.58,93.05 L435.76,93.12 L435.94,93.19 L436.12,93.27 L436.30,93.35 L436.48,93.43 L436.66,93.51 L436.83,93.60 L437.01,93.68 L437.18,93.78 L437.36,93.87 L437.53,93.96 L437.70,94.06 L437.87,94.16 L438.04,94.26 L438.20,94.36 L438.37,94.47 L438.53,94.58 L438.70,94.69 L438.86,94.80 L439.02,94.91 L439.17,95.03 L439.33,95.15 L439.49,95.27 L439.64,95.39 L439.79,95.52 L439.94,95.64 L440.09,95.77 L440.24,95.90 L440.38,96.04 L440.53,96.17 L440.67,96.31 L440.81,96.44 L440.94,96.58 L441.08,96.72 L441.21,96.87 L441.35,97.01 L441.48,97.16 L441.61,97.31 L441.73,97.46 L441.86,97.61 L441.98,97.76 L442.10,97.92 L442.22,98.08 L442.34,98.23 L442.45,98.39 L442.56,98.55 L442.67,98.72 L442.78,98.88 L442.89,99.05 L442.99,99.21 L443.09,99.38 L443.19,99.55 L443.29,99.72 L443.38,99.89 L443.47,100.07 L443.57,100.24 L443.65,100.42 L443.74,100.59 L443.82,100.77 L443.90,100.95 L443.98,101.13 L444.06,101.31 L444.13,101.49 L444.20,101.67 L444.27,101.86 L444.34,102.04 L444.40,102.23 L444.47,102.41 L444.53,102.60 L444.58,102.79 L444.64,102.98 L444.69,103.17 L444.74,103.36 L444.79,103.55 L444.83,103.74 L444.87,103.93 L444.91,104.12 L444.95,104.32 L444.98,104.51 L445.02,104.70 L445.04,104.90 L445.07,105.09 L445.10,105.29 L445.12,105.48 L445.14,105.68 L445.15,105.87 L445.17,106.07 L445.18,106.26 L445.19,106.46 L445.19,106.66 L445.20,106.85 L445.20,107.05 L445.20,107.25 L445.19,107.44 L445.19,107.64 L445.18,107.84 L445.17,108.03 L445.15,108.23 L445.14,108.42 L445.12,108.62 L445.10,108.81 L445.07,109.01 L445.04,109.20 L445.02,109.40 L444.98,109.59 L444.95,109.78 L444.91,109.98 L444.87,110.17 L444.83,110.36 L444.79,110.55 L444.74,110.74 L444.69,110.93 L444.64,111.12 L444.58,111.31 L444.53,111.50 L444.47,111.69 L444.40,111.87 L444.34,112.06 L444.27,112.24 L444.20,112.43 L444.13,112.61 L444.06,112.79 L443.98,112.97 L443.90,113.15 L443.82,113.33 L443.74,113.51 L443.65,113.68 L443.57,113.86 L443.47,114.03 L443.38,114.21 L443.29,114.38 L443.19,114.55 L443.09,114.72 L442.99,114.89 L442.89,115.05 L442.78,115.22 L442.67,115.38 L442.56,115.55 L442.45,115.71 L442.34,115.87 L442.22,116.02 L442.10,116.18 L441.98,116.34 L441.86,116.49 L441.73,116.64 L441.61,116.79 L441.48,116.94 L441.35,117.09 L441.21,117.23 L441.08,117.38 L440.94,117.52 L440.81,117.66 L437.12,113.97 L437.18,113.85 L437.25,113.74 L437.31,113.62 L437.37,113.51 L437.43,113.39 L437.49,113.27 L437.54,113.16 L437.60,113.04 L437.65,112.92 L437.70,112.80 L437.75,112.69 L437.80,112.57 L437.84,112.45 L437.89,112.33 L437.93,112.21 L437.97,112.10 L438.01,111.98 L438.05,111.86 L438.08,111.74 L438.12,111.62 L438.15,111.50 L438.18,111.38 L438.21,111.27 L438.24,111.15 L438.27,111.03 L438.29,110.91 L438.32,110.79 L438.34,110.67 L438.36,110.56 L438.38,110.44 L438.40,110.32 L438.42,110.20 L438.43,110.09 L438.44,109.97 L438.46,109.85 L438.47,109.74 L438.48,109.62 L438.49,109.50 L438.49,109.39 L438.50,109.27 L438.50,109.16 L438.51,109.04 L438.51,108.93 L438.51,108.82 L438.51,108.70 L438.51,108.59 L438.50,108.48 L438.50,108.36 L438.49,108.25 L438.49,108.14 L438.48,108.03 L438.47,107.92 L438.46,107.81 L438.45,107.70 L438.44,107.59 L438.42,107.48 L438.41,107.37 L438.39,107.26 L438.37,107.16 L438.36,107.05 L438.34,106.94 L438.32,106.84 L438.29,106.73 L438.27,106.63 L438.25,106.52 L438.22,106.42 L438.20,106.32 L438.17,106.21 L438.14,106.11 L438.11,106.01 L438.09,105.91 L438.05,105.81 L438.02,105.71 L437.99,105.61 L437.96,105.51 L437.92,105.41 L437.89,105.31 L437.85,105.21 L437.81,105.12 L437.78,105.02 L437.74,104.92 L437.70,104.83 L437.66,104.73 L437.61,104.64 L437.57,104.55 L437.53,104.45 L437.48,104.36 L437.44,104.27 L437.39,104.18 L437.35,104.09 L437.30,104.00 L437.25,103.91 L437.20,103.82 L437.15,103.73 L437.10,103.65 L437.05,103.56 L437.00,103.47 L436.94,103.39 L436.89,103.30 L436.83,103.22 L436.78,103.14 L436.72,103.05 L436.67,102.97 L436.61,102.89 L436.55,102.81 L436.49,102.73 L436.43,102.65 L436.37,102.57 L436.31,102.49 L436.25,102.41 L436.18,102.33 L436.12,102.26 L436.05,102.18 L435.99,102.11 L435.92,102.03 L435.86,101.96 L435.79,101.88 L435.72,101.81 L435.65,101.74 L435.58,101.67 L435.51,101.60 L435.44,101.53 L435.37,101.46 L435.30,101.39 L435.22,101.32 L435.15,101.25 L435.08,101.19 L435.00,101.12 L434.93,101.06 L434.85,100.99 L434.77,100.93 L434.69,100.86 L434.62,100.80 L434.54,100.74 L434.46,100.68 L434.38,100.62 L434.29,100.56 L434.21,100.50 L434.13,100.44 L434.05,100.39 L433.96,100.33 L433.88,100.27 L433.79,100.22 L433.71,100.17 L433.62,100.11 L433.53,100.06 L433.45,100.01 L433.36,99.96 L433.27,99.91 L433.18,99.86 L433.09,99.81 L433.00,99.76 L432.91,99.71 L432.81,99.67 L432.72,99.62 L432.63,99.58 L432.53,99.54 L432.44,99.49 L432.34,99.45 L432.25,99.41 L432.15,99.37 L432.05,99.33 L431.96,99.29 L431.86,99.26 L431.76,99.22 L431.66,99.19 L431.56,99.15 L431.46,99.12 L431.35,99.09 L431.25,99.05 L431.15,99.02 L431.05,98.99 L430.94,98.97 L430.84,98.94 L430.73,98.91 L430.63,98.89 L430.52,98.86 L430.41,98.84 L430.31,98.82 L430.20,98.80 L430.09,98.78 L429.98,98.76 L429.87,98.74 L429.76,98.72 L429.65,98.71 L429.54,98.69 L429.43,98.68 L429.32,98.67 L429.21,98.66 L429.09,98.65 L428.98,98.64 L428.87,98.64 L428.75,98.63 L428.64,98.63 L428.52,98.62 L428.41,98.62 L428.29,98.62 L428.18,98.62 L428.06,98.62 L427.94,98.63 L427.83,98.63 L427.71,98.64 L427.59,98.65 L427.47,98.65 L427.35,98.66 L427.23,98.68 L427.12,98.69 L427.00,98.70 L426.88,98.72 L426.76,98.74 L426.64,98.76 L426.52,98.78 L426.40,98.80 L426.28,98.82 L426.16,98.85 L426.04,98.88 L425.91,98.91 L425.79,98.94 L425.67,98.97 L425.55,99.00 L425.43,99.03 L425.31,99.07 L425.19,99.11 L425.07,99.15 L424.95,99.19 L424.83,99.23 L424.71,99.28 L424.59,99.32 L424.47,99.37 L424.35,99.42 L424.23,99.47 L424.11,99.53 L423.99,99.58 L423.87,99.64 L423.75,99.70 L423.63,99.76 L423.51,99.82 L423.40,99.88 L423.28,99.95 L423.16,100.01 L423.05,100.08 L422.93,100.15 L422.82,100.23 L422.70,100.30 L422.59,100.38 L422.48,100.45 L422.36,100.53 L422.25,100.61 L422.14,100.70 L422.03,100.78 L421.92,100.87 L421.81,100.96 L421.71,101.05 L421.60,101.14 L421.49,101.23 L421.39,101.33 L421.28,101.42 L421.18,101.52 L421.08,101.62 L420.98,101.73 L420.88,101.83 L420.78,101.94 L420.69,102.04 L420.59,102.15 L420.50,102.26 L420.40,102.38 L420.31,102.49 L420.22,102.61 L420.13,102.72 L420.04,102.84 L419.96,102.96 L419.87,103.09 L419.79,103.21 L419.71,103.34 L419.63,103.46 L419.55,103.59 L419.48,103.72 L419.40,103.85 L419.33,103.98 L419.26,104.12 L419.19,104.25 L419.12,104.39 L419.06,104.53 L418.99,104.67 L418.93,104.81 L418.87,104.95 L418.82,105.09 L418.76,105.24 L418.71,105.38 L418.66,105.53 L418.61,105.68 L418.56,105.83 L418.51,105.98 L418.47,106.13 L418.43,106.28 L418.39,106.43 L418.36,106.58 L418.32,106.74 L418.29,106.89 L418.26,107.05 L418.24,107.21 L418.21,107.36 L418.19,107.52 L418.17,107.68 L418.16,107.84 L418.14,108.00 L418.13,108.16 L418.12,108.32 L418.12,108.48 L418.11,108.64 L418.11,108.80 L418.11,108.96 L418.11,109.13 L418.12,109.29 L418.13,109.45 L418.14,109.61 L418.15,109.78 L418.17,109.94 L418.19,110.10 L418.21,110.26 L418.24,110.42 L418.26,110.59 L418.29,110.75 L418.33,110.91 L418.36,111.07 L418.40,111.23 L418.44,111.39 L418.48,111.55 L418.53,111.71 L418.58,111.87 L418.63,112.02 L418.68,112.18 L418.73,112.34 L418.79,112.49 L418.85,112.65 L418.92,112.80 L418.98,112.95 L419.05,113.10 L419.12,113.25 L419.20,113.40 L419.27,113.55 L419.35,113.70 L419.43,113.84 L419.52,113.99 L419.60,114.13 L419.69,114.27 L419.78,114.41 L419.87,114.55 L419.97,114.69 L420.07,114.83 L420.17,114.96 L420.27,115.09 L420.37,115.22 L420.48,115.35 L420.59,115.48 L420.70,115.61 L420.81,115.73 L420.92,115.85 L421.04,115.97 L421.16,116.09Z" fill="#b8c41c"/>
<path d="M431.10,108.48 L430.72,92.26 L429.20,108.42Z" fill="#6a6a6a"/>
<circle cx="430.15" cy="108.45" r="0.95" fill="#6a6a6a"/>
<circle cx="425.6" cy="91.3" r="0.7" fill="#bbb"/>
<circle cx="443.0" cy="120.1" r="1.9" fill="none" stroke="#d2d2d2" stroke-width="1.0" stroke-dasharray="1.1 0.55"/>
<circle cx="443.0" cy="120.1" r="1.5999999999999999" fill="none" stroke="#d2d2d2" stroke-width="0.7"/>
<path transform="translate(448.6,117.8) scale(1.0)" d="M0,0 h3.6 v0.8 h-0.7 v1.4 l0.7,1 v0.6 h-1.4 v1.6 l-0.4,0.6 l-0.4,-0.6 v-1.6 h-1.4 v-0.6 l0.7,-1 v-1.4 h-0.7z" fill="#d6d6d6"/>
<path d="M527.59,117.66 L527.46,117.52 L527.32,117.38 L527.19,117.23 L527.05,117.09 L526.92,116.94 L526.79,116.79 L526.67,116.64 L526.54,116.49 L526.42,116.34 L526.30,116.18 L526.18,116.02 L526.06,115.87 L525.95,115.71 L525.84,115.55 L525.73,115.38 L525.62,115.22 L525.51,115.05 L525.41,114.89 L525.31,114.72 L525.21,114.55 L525.11,114.38 L525.02,114.21 L524.93,114.03 L524.83,113.86 L524.75,113.68 L524.66,113.51 L524.58,113.33 L524.50,113.15 L524.42,112.97 L524.34,112.79 L524.27,112.61 L524.20,112.43 L524.13,112.24 L524.06,112.06 L524.00,111.87 L523.93,111.69 L523.87,111.50 L523.82,111.31 L523.76,111.12 L523.71,110.93 L523.66,110.74 L523.61,110.55 L523.57,110.36 L523.53,110.17 L523.49,109.98 L523.45,109.78 L523.42,109.59 L523.38,109.40 L523.36,109.20 L523.33,109.01 L523.30,108.81 L523.28,108.62 L523.26,108.42 L523.25,108.23 L523.23,108.03 L523.22,107.84 L523.21,107.64 L523.21,107.44 L523.20,107.25 L523.20,107.05 L523.20,106.85 L523.21,106.66 L523.21,106.46 L523.22,106.26 L523.23,106.07 L523.25,105.87 L523.26,105.68 L523.28,105.48 L523.30,105.29 L523.33,105.09 L523.36,104.90 L523.38,104.70 L523.42,104.51 L523.45,104.32 L523.49,104.12 L523.53,103.93 L523.57,103.74 L523.61,103.55 L523.66,103.36 L523.71,103.17 L523.76,102.98 L523.82,102.79 L523.87,102.60 L523.93,102.41 L524.00,102.23 L524.06,102.04 L524.13,101.86 L524.20,101.67 L524.27,101.49 L524.34,101.31 L524.42,101.13 L524.50,100.95 L524.58,100.77 L524.66,100.59 L524.75,100.42 L524.83,100.24 L524.93,100.07 L525.02,99.89 L525.11,99.72 L525.21,99.55 L525.31,99.38 L525.41,99.21 L525.51,99.05 L525.62,98.88 L525.73,98.72 L525.84,98.55 L525.95,98.39 L526.06,98.23 L526.18,98.08 L526.30,97.92 L526.42,97.76 L526.54,97.61 L526.67,97.46 L526.79,97.31 L526.92,97.16 L527.05,97.01 L527.19,96.87 L527.32,96.72 L527.46,96.58 L527.59,96.44 L527.73,96.31 L527.87,96.17 L528.02,96.04 L528.16,95.90 L528.31,95.77 L528.46,95.64 L528.61,95.52 L528.76,95.39 L528.91,95.27 L529.07,95.15 L529.23,95.03 L529.38,94.91 L529.54,94.80 L529.70,94.69 L529.87,94.58 L530.03,94.47 L530.20,94.36 L530.36,94.26 L530.53,94.16 L530.70,94.06 L530.87,93.96 L531.04,93.87 L531.22,93.78 L531.39,93.68 L531.57,93.60 L531.74,93.51 L531.92,93.43 L532.10,93.35 L532.28,93.27 L532.46,93.19 L532.64,93.12 L532.82,93.05 L533.01,92.98 L533.19,92.91 L533.38,92.85 L533.56,92.78 L533.75,92.72 L533.94,92.67 L534.13,92.61 L534.32,92.56 L534.51,92.51 L534.70,92.46 L534.89,92.42 L535.08,92.38 L535.27,92.34 L535.47,92.30 L535.66,92.27 L535.85,92.23 L536.05,92.21 L536.24,92.18 L536.44,92.15 L536.63,92.13 L536.83,92.11 L537.02,92.10 L537.22,92.08 L537.41,92.07 L537.61,92.06 L537.81,92.06 L538.00,92.05 L538.20,92.05 L538.40,92.05 L538.59,92.06 L538.79,92.06 L538.99,92.07 L539.18,92.08 L539.38,92.10 L539.57,92.11 L539.77,92.13 L539.96,92.15 L540.16,92.18 L540.35,92.21 L540.55,92.23 L540.74,92.27 L540.93,92.30 L541.13,92.34 L541.32,92.38 L541.51,92.42 L541.70,92.46 L541.89,92.51 L542.08,92.56 L542.27,92.61 L542.46,92.67 L542.65,92.72 L542.84,92.78 L543.02,92.85 L543.21,92.91 L543.39,92.98 L543.58,93.05 L543.76,93.12 L543.94,93.19 L544.12,93.27 L544.30,93.35 L544.48,93.43 L544.66,93.51 L544.83,93.60 L545.01,93.68 L545.18,93.78 L545.36,93.87 L545.53,93.96 L545.70,94.06 L545.87,94.16 L546.04,94.26 L546.20,94.36 L546.37,94.47 L546.53,94.58 L546.70,94.69 L546.86,94.80 L547.02,94.91 L547.17,95.03 L547.33,95.15 L547.49,95.27 L547.64,95.39 L547.79,95.52 L547.94,95.64 L548.09,95.77 L548.24,95.90 L548.38,96.04 L548.53,96.17 L548.67,96.31 L548.81,96.44 L548.94,96.58 L549.08,96.72 L549.21,96.87 L549.35,97.01 L549.48,97.16 L549.61,97.31 L549.73,97.46 L549.86,97.61 L549.98,97.76 L550.10,97.92 L550.22,98.08 L550.34,98.23 L550.45,98.39 L550.56,98.55 L550.67,98.72 L550.78,98.88 L550.89,99.05 L550.99,99.21 L551.09,99.38 L551.19,99.55 L551.29,99.72 L551.38,99.89 L551.47,100.07 L551.57,100.24 L551.65,100.42 L551.74,100.59 L551.82,100.77 L551.90,100.95 L551.98,101.13 L552.06,101.31 L552.13,101.49 L552.20,101.67 L552.27,101.86 L552.34,102.04 L552.40,102.23 L552.47,102.41 L552.53,102.60 L552.58,102.79 L552.64,102.98 L552.69,103.17 L552.74,103.36 L552.79,103.55 L552.83,103.74 L552.87,103.93 L552.91,104.12 L552.95,104.32 L552.98,104.51 L553.02,104.70 L553.04,104.90 L553.07,105.09 L553.10,105.29 L553.12,105.48 L553.14,105.68 L553.15,105.87 L553.17,106.07 L553.18,106.26 L553.19,106.46 L553.19,106.66 L553.20,106.85 L553.20,107.05 L553.20,107.25 L553.19,107.44 L553.19,107.64 L553.18,107.84 L553.17,108.03 L553.15,108.23 L553.14,108.42 L553.12,108.62 L553.10,108.81 L553.07,109.01 L553.04,109.20 L553.02,109.40 L552.98,109.59 L552.95,109.78 L552.91,109.98 L552.87,110.17 L552.83,110.36 L552.79,110.55 L552.74,110.74 L552.69,110.93 L552.64,111.12 L552.58,111.31 L552.53,111.50 L552.47,111.69 L552.40,111.87 L552.34,112.06 L552.27,112.24 L552.20,112.43 L552.13,112.61 L552.06,112.79 L551.98,112.97 L551.90,113.15 L551.82,113.33 L551.74,113.51 L551.65,113.68 L551.57,113.86 L551.47,114.03 L551.38,114.21 L551.29,114.38 L551.19,114.55 L551.09,114.72 L550.99,114.89 L550.89,115.05 L550.78,115.22 L550.67,115.38 L550.56,115.55 L550.45,115.71 L550.34,115.87 L550.22,116.02 L550.10,116.18 L549.98,116.34 L549.86,116.49 L549.73,116.64 L549.61,116.79 L549.48,116.94 L549.35,117.09 L549.21,117.23 L549.08,117.38 L548.94,117.52 L548.81,117.66 L545.12,113.97 L545.18,113.85 L545.25,113.74 L545.31,113.62 L545.37,113.51 L545.43,113.39 L545.49,113.27 L545.54,113.16 L545.60,113.04 L545.65,112.92 L545.70,112.80 L545.75,112.69 L545.80,112.57 L545.84,112.45 L545.89,112.33 L545.93,112.21 L545.97,112.10 L546.01,111.98 L546.05,111.86 L546.08,111.74 L546.12,111.62 L546.15,111.50 L546.18,111.38 L546.21,111.27 L546.24,111.15 L546.27,111.03 L546.29,110.91 L546.32,110.79 L546.34,110.67 L546.36,110.56 L546.38,110.44 L546.40,110.32 L546.42,110.20 L546.43,110.09 L546.44,109.97 L546.46,109.85 L546.47,109.74 L546.48,109.62 L546.49,109.50 L546.49,109.39 L546.50,109.27 L546.50,109.16 L546.51,109.04 L546.51,108.93 L546.51,108.82 L546.51,108.70 L546.51,108.59 L546.50,108.48 L546.50,108.36 L546.49,108.25 L546.49,108.14 L546.48,108.03 L546.47,107.92 L546.46,107.81 L546.45,107.70 L546.44,107.59 L546.42,107.48 L546.41,107.37 L546.39,107.26 L546.37,107.16 L546.36,107.05 L546.34,106.94 L546.32,106.84 L546.29,106.73 L546.27,106.63 L546.25,106.52 L546.22,106.42 L546.20,106.32 L546.17,106.21 L546.14,106.11 L546.11,106.01 L546.09,105.91 L546.05,105.81 L546.02,105.71 L545.99,105.61 L545.96,105.51 L545.92,105.41 L545.89,105.31 L545.85,105.21 L545.81,105.12 L545.78,105.02 L545.74,104.92 L545.70,104.83 L545.66,104.73 L545.61,104.64 L545.57,104.55 L545.53,104.45 L545.48,104.36 L545.44,104.27 L545.39,104.18 L545.35,104.09 L545.30,104.00 L545.25,103.91 L545.20,103.82 L545.15,103.73 L545.10,103.65 L545.05,103.56 L545.00,103.47 L544.94,103.39 L544.89,103.30 L544.83,103.22 L544.78,103.14 L544.72,103.05 L544.67,102.97 L544.61,102.89 L544.55,102.81 L544.49,102.73 L544.43,102.65 L544.37,102.57 L544.31,102.49 L544.25,102.41 L544.18,102.33 L544.12,102.26 L544.05,102.18 L543.99,102.11 L543.92,102.03 L543.86,101.96 L543.79,101.88 L543.72,101.81 L543.65,101.74 L543.58,101.67 L543.51,101.60 L543.44,101.53 L543.37,101.46 L543.30,101.39 L543.22,101.32 L543.15,101.25 L543.08,101.19 L543.00,101.12 L542.93,101.06 L542.85,100.99 L542.77,100.93 L542.69,100.86 L542.62,100.80 L542.54,100.74 L542.46,100.68 L542.38,100.62 L542.29,100.56 L542.21,100.50 L542.13,100.44 L542.05,100.39 L541.96,100.33 L541.88,100.27 L541.79,100.22 L541.71,100.17 L541.62,100.11 L541.53,100.06 L541.45,100.01 L541.36,99.96 L541.27,99.91 L541.18,99.86 L541.09,99.81 L541.00,99.76 L540.91,99.71 L540.81,99.67 L540.72,99.62 L540.63,99.58 L540.53,99.54 L540.44,99.49 L540.34,99.45 L540.25,99.41 L540.15,99.37 L540.05,99.33 L539.96,99.29 L539.86,99.26 L539.76,99.22 L539.66,99.19 L539.56,99.15 L539.46,99.12 L539.35,99.09 L539.25,99.05 L539.15,99.02 L539.05,98.99 L538.94,98.97 L538.84,98.94 L538.73,98.91 L538.63,98.89 L538.52,98.86 L538.41,98.84 L538.31,98.82 L538.20,98.80 L538.09,98.78 L537.98,98.76 L537.87,98.74 L537.76,98.72 L537.65,98.71 L537.54,98.69 L537.43,98.68 L537.32,98.67 L537.21,98.66 L537.09,98.65 L536.98,98.64 L536.87,98.64 L536.75,98.63 L536.64,98.63 L536.52,98.62 L536.41,98.62 L536.29,98.62 L536.18,98.62 L536.06,98.62 L535.94,98.63 L535.83,98.63 L535.71,98.64 L535.59,98.65 L535.47,98.65 L535.35,98.66 L535.23,98.68 L535.12,98.69 L535.00,98.70 L534.88,98.72 L534.76,98.74 L534.64,98.76 L534.52,98.78 L534.40,98.80 L534.28,98.82 L534.16,98.85 L534.04,98.88 L533.91,98.91 L533.79,98.94 L533.67,98.97 L533.55,99.00 L533.43,99.03 L533.31,99.07 L533.19,99.11 L533.07,99.15 L532.95,99.19 L532.83,99.23 L532.71,99.28 L532.59,99.32 L532.47,99.37 L532.35,99.42 L532.23,99.47 L532.11,99.53 L531.99,99.58 L531.87,99.64 L531.75,99.70 L531.63,99.76 L531.51,99.82 L531.40,99.88 L531.28,99.95 L531.16,100.01 L531.05,100.08 L530.93,100.15 L530.82,100.23 L530.70,100.30 L530.59,100.38 L530.48,100.45 L530.36,100.53 L530.25,100.61 L530.14,100.70 L530.03,100.78 L529.92,100.87 L529.81,100.96 L529.71,101.05 L529.60,101.14 L529.49,101.23 L529.39,101.33 L529.28,101.42 L529.18,101.52 L529.08,101.62 L528.98,101.73 L528.88,101.83 L528.78,101.94 L528.69,102.04 L528.59,102.15 L528.50,102.26 L528.40,102.38 L528.31,102.49 L528.22,102.61 L528.13,102.72 L528.04,102.84 L527.96,102.96 L527.87,103.09 L527.79,103.21 L527.71,103.34 L527.63,103.46 L527.55,103.59 L527.48,103.72 L527.40,103.85 L527.33,103.98 L527.26,104.12 L527.19,104.25 L527.12,104.39 L527.06,104.53 L526.99,104.67 L526.93,104.81 L526.87,104.95 L526.82,105.09 L526.76,105.24 L526.71,105.38 L526.66,105.53 L526.61,105.68 L526.56,105.83 L526.51,105.98 L526.47,106.13 L526.43,106.28 L526.39,106.43 L526.36,106.58 L526.32,106.74 L526.29,106.89 L526.26,107.05 L526.24,107.21 L526.21,107.36 L526.19,107.52 L526.17,107.68 L526.16,107.84 L526.14,108.00 L526.13,108.16 L526.12,108.32 L526.12,108.48 L526.11,108.64 L526.11,108.80 L526.11,108.96 L526.11,109.13 L526.12,109.29 L526.13,109.45 L526.14,109.61 L526.15,109.78 L526.17,109.94 L526.19,110.10 L526.21,110.26 L526.24,110.42 L526.26,110.59 L526.29,110.75 L526.33,110.91 L526.36,111.07 L526.40,111.23 L526.44,111.39 L526.48,111.55 L526.53,111.71 L526.58,111.87 L526.63,112.02 L526.68,112.18 L526.73,112.34 L526.79,112.49 L526.85,112.65 L526.92,112.80 L526.98,112.95 L527.05,113.10 L527.12,113.25 L527.20,113.40 L527.27,113.55 L527.35,113.70 L527.43,113.84 L527.52,113.99 L527.60,114.13 L527.69,114.27 L527.78,114.41 L527.87,114.55 L527.97,114.69 L528.07,114.83 L528.17,114.96 L528.27,115.09 L528.37,115.22 L528.48,115.35 L528.59,115.48 L528.70,115.61 L528.81,115.73 L528.92,115.85 L529.04,115.97 L529.16,116.09Z" fill="#b8c41c"/>
<line x1="537.28" y1="106.13" x2="549.16" y2="118.01" stroke="#3a3a3a" stroke-width="0.9"/>
<circle cx="526" cy="118.6" r="0.7" fill="#bbb"/>
<circle cx="551.0" cy="120.1" r="1.9" fill="none" stroke="#d2d2d2" stroke-width="1.0" stroke-dasharray="1.1 0.55"/>
<circle cx="551.0" cy="120.1" r="1.5999999999999999" fill="none" stroke="#d2d2d2" stroke-width="0.7"/>
<path transform="translate(556.6,117.8) scale(1.0)" d="M0,0 h3.6 v0.8 h-0.7 v1.4 l0.7,1 v0.6 h-1.4 v1.6 l-0.4,0.6 l-0.4,-0.6 v-1.6 h-1.4 v-0.6 l0.7,-1 v-1.4 h-0.7z" fill="#d6d6d6"/>
<path d="M311.39,168.76 L311.26,168.62 L311.12,168.48 L310.99,168.33 L310.85,168.19 L310.72,168.04 L310.59,167.89 L310.47,167.74 L310.34,167.59 L310.22,167.44 L310.10,167.28 L309.98,167.12 L309.86,166.97 L309.75,166.81 L309.64,166.65 L309.53,166.48 L309.42,166.32 L309.31,166.15 L309.21,165.99 L309.11,165.82 L309.01,165.65 L308.91,165.48 L308.82,165.31 L308.73,165.13 L308.63,164.96 L308.55,164.78 L308.46,164.61 L308.38,164.43 L308.30,164.25 L308.22,164.07 L308.14,163.89 L308.07,163.71 L308.00,163.53 L307.93,163.34 L307.86,163.16 L307.80,162.97 L307.73,162.79 L307.67,162.60 L307.62,162.41 L307.56,162.22 L307.51,162.03 L307.46,161.84 L307.41,161.65 L307.37,161.46 L307.33,161.27 L307.29,161.08 L307.25,160.88 L307.22,160.69 L307.18,160.50 L307.16,160.30 L307.13,160.11 L307.10,159.91 L307.08,159.72 L307.06,159.52 L307.05,159.33 L307.03,159.13 L307.02,158.94 L307.01,158.74 L307.01,158.54 L307.00,158.35 L307.00,158.15 L307.00,157.95 L307.01,157.76 L307.01,157.56 L307.02,157.36 L307.03,157.17 L307.05,156.97 L307.06,156.78 L307.08,156.58 L307.10,156.39 L307.13,156.19 L307.16,156.00 L307.18,155.80 L307.22,155.61 L307.25,155.42 L307.29,155.22 L307.33,155.03 L307.37,154.84 L307.41,154.65 L307.46,154.46 L307.51,154.27 L307.56,154.08 L307.62,153.89 L307.67,153.70 L307.73,153.51 L307.80,153.33 L307.86,153.14 L307.93,152.96 L308.00,152.77 L308.07,152.59 L308.14,152.41 L308.22,152.23 L308.30,152.05 L308.38,151.87 L308.46,151.69 L308.55,151.52 L308.63,151.34 L308.73,151.17 L308.82,150.99 L308.91,150.82 L309.01,150.65 L309.11,150.48 L309.21,150.31 L309.31,150.15 L309.42,149.98 L309.53,149.82 L309.64,149.65 L309.75,149.49 L309.86,149.33 L309.98,149.18 L310.10,149.02 L310.22,148.86 L310.34,148.71 L310.47,148.56 L310.59,148.41 L310.72,148.26 L310.85,148.11 L310.99,147.97 L311.12,147.82 L311.26,147.68 L311.39,147.54 L311.53,147.41 L311.67,147.27 L311.82,147.14 L311.96,147.00 L312.11,146.87 L312.26,146.74 L312.41,146.62 L312.56,146.49 L312.71,146.37 L312.87,146.25 L313.03,146.13 L313.18,146.01 L313.34,145.90 L313.50,145.79 L313.67,145.68 L313.83,145.57 L314.00,145.46 L314.16,145.36 L314.33,145.26 L314.50,145.16 L314.67,145.06 L314.84,144.97 L315.02,144.88 L315.19,144.78 L315.37,144.70 L315.54,144.61 L315.72,144.53 L315.90,144.45 L316.08,144.37 L316.26,144.29 L316.44,144.22 L316.62,144.15 L316.81,144.08 L316.99,144.01 L317.18,143.95 L317.36,143.88 L317.55,143.82 L317.74,143.77 L317.93,143.71 L318.12,143.66 L318.31,143.61 L318.50,143.56 L318.69,143.52 L318.88,143.48 L319.07,143.44 L319.27,143.40 L319.46,143.37 L319.65,143.33 L319.85,143.31 L320.04,143.28 L320.24,143.25 L320.43,143.23 L320.63,143.21 L320.82,143.20 L321.02,143.18 L321.21,143.17 L321.41,143.16 L321.61,143.16 L321.80,143.15 L322.00,143.15 L322.20,143.15 L322.39,143.16 L322.59,143.16 L322.79,143.17 L322.98,143.18 L323.18,143.20 L323.37,143.21 L323.57,143.23 L323.76,143.25 L323.96,143.28 L324.15,143.31 L324.35,143.33 L324.54,143.37 L324.73,143.40 L324.93,143.44 L325.12,143.48 L325.31,143.52 L325.50,143.56 L325.69,143.61 L325.88,143.66 L326.07,143.71 L326.26,143.77 L326.45,143.82 L326.64,143.88 L326.82,143.95 L327.01,144.01 L327.19,144.08 L327.38,144.15 L327.56,144.22 L327.74,144.29 L327.92,144.37 L328.10,144.45 L328.28,144.53 L328.46,144.61 L328.63,144.70 L328.81,144.78 L328.98,144.88 L329.16,144.97 L329.33,145.06 L329.50,145.16 L329.67,145.26 L329.84,145.36 L330.00,145.46 L330.17,145.57 L330.33,145.68 L330.50,145.79 L330.66,145.90 L330.82,146.01 L330.97,146.13 L331.13,146.25 L331.29,146.37 L331.44,146.49 L331.59,146.62 L331.74,146.74 L331.89,146.87 L332.04,147.00 L332.18,147.14 L332.33,147.27 L332.47,147.41 L332.61,147.54 L332.74,147.68 L332.88,147.82 L333.01,147.97 L333.15,148.11 L333.28,148.26 L333.41,148.41 L333.53,148.56 L333.66,148.71 L333.78,148.86 L333.90,149.02 L334.02,149.18 L334.14,149.33 L334.25,149.49 L334.36,149.65 L334.47,149.82 L334.58,149.98 L334.69,150.15 L334.79,150.31 L334.89,150.48 L334.99,150.65 L335.09,150.82 L335.18,150.99 L335.27,151.17 L335.37,151.34 L335.45,151.52 L335.54,151.69 L335.62,151.87 L335.70,152.05 L335.78,152.23 L335.86,152.41 L335.93,152.59 L336.00,152.77 L336.07,152.96 L336.14,153.14 L336.20,153.33 L336.27,153.51 L336.33,153.70 L336.38,153.89 L336.44,154.08 L336.49,154.27 L336.54,154.46 L336.59,154.65 L336.63,154.84 L336.67,155.03 L336.71,155.22 L336.75,155.42 L336.78,155.61 L336.82,155.80 L336.84,156.00 L336.84,156.20 L336.63,156.42 L336.42,156.63 L336.21,156.84 L335.99,157.05 L335.77,157.25 L335.61,157.44 L335.85,157.61 L336.09,157.78 L336.33,157.96 L336.56,158.15 L336.80,158.34 L336.99,158.54 L336.99,158.74 L336.98,158.94 L336.97,159.13 L336.95,159.33 L336.94,159.52 L336.92,159.72 L336.90,159.91 L336.87,160.11 L336.84,160.30 L336.82,160.50 L336.78,160.69 L336.75,160.88 L336.71,161.08 L336.67,161.27 L336.63,161.46 L336.59,161.65 L336.54,161.84 L336.49,162.03 L336.44,162.22 L336.38,162.41 L336.33,162.60 L336.27,162.79 L336.20,162.97 L336.14,163.16 L336.07,163.34 L336.00,163.53 L335.93,163.71 L335.86,163.89 L335.78,164.07 L335.70,164.25 L335.62,164.43 L335.54,164.61 L335.45,164.78 L335.37,164.96 L335.27,165.13 L335.18,165.31 L335.09,165.48 L334.99,165.65 L334.89,165.82 L334.79,165.99 L334.69,166.15 L334.58,166.32 L334.47,166.48 L334.36,166.65 L334.25,166.81 L334.14,166.97 L334.02,167.12 L333.90,167.28 L333.78,167.44 L333.66,167.59 L333.53,167.74 L333.41,167.89 L333.28,168.04 L333.15,168.19 L333.01,168.33 L332.88,168.48 L332.74,168.62 L332.61,168.76 L328.92,165.07 L328.98,164.95 L329.05,164.84 L329.11,164.72 L329.17,164.61 L329.23,164.49 L329.29,164.37 L329.34,164.26 L329.40,164.14 L329.45,164.02 L329.50,163.90 L329.55,163.79 L329.60,163.67 L329.64,163.55 L329.69,163.43 L329.73,163.31 L329.77,163.20 L329.81,163.08 L329.85,162.96 L329.88,162.84 L329.92,162.72 L329.95,162.60 L329.98,162.48 L330.01,162.37 L330.04,162.25 L330.07,162.13 L330.09,162.01 L330.12,161.89 L330.14,161.77 L330.16,161.66 L330.18,161.54 L330.20,161.42 L330.22,161.30 L330.23,161.19 L330.24,161.07 L330.26,160.95 L330.27,160.84 L330.28,160.72 L330.29,160.60 L330.29,160.49 L330.30,160.37 L330.30,160.26 L330.31,160.14 L330.31,160.03 L330.31,159.92 L330.31,159.80 L330.31,159.69 L330.30,159.58 L330.30,159.46 L330.29,159.35 L330.29,159.24 L330.28,159.13 L330.27,159.02 L330.26,158.91 L330.25,158.80 L330.24,158.69 L330.22,158.58 L330.21,158.47 L330.19,158.36 L330.17,158.26 L330.16,158.15 L330.14,158.04 L330.12,157.94 L330.09,157.83 L330.07,157.73 L330.05,157.62 L330.02,157.52 L330.00,157.42 L329.97,157.31 L329.94,157.21 L329.91,157.11 L329.89,157.01 L329.85,156.91 L329.82,156.81 L329.79,156.71 L329.76,156.61 L329.72,156.51 L329.69,156.41 L329.65,156.31 L329.61,156.22 L329.58,156.12 L329.54,156.02 L329.50,155.93 L329.46,155.83 L329.41,155.74 L329.37,155.65 L329.33,155.55 L329.28,155.46 L329.24,155.37 L329.19,155.28 L329.15,155.19 L329.10,155.10 L329.05,155.01 L329.00,154.92 L328.95,154.83 L328.90,154.75 L328.85,154.66 L328.80,154.57 L328.74,154.49 L328.69,154.40 L328.63,154.32 L328.58,154.24 L328.52,154.15 L328.47,154.07 L328.41,153.99 L328.35,153.91 L328.29,153.83 L328.23,153.75 L328.17,153.67 L328.11,153.59 L328.05,153.51 L327.98,153.43 L327.92,153.36 L327.85,153.28 L327.79,153.21 L327.72,153.13 L327.66,153.06 L327.59,152.98 L327.52,152.91 L327.45,152.84 L327.38,152.77 L327.31,152.70 L327.24,152.63 L327.17,152.56 L327.10,152.49 L327.02,152.42 L326.95,152.35 L326.88,152.29 L326.80,152.22 L326.73,152.16 L326.65,152.09 L326.57,152.03 L326.49,151.96 L326.42,151.90 L326.34,151.84 L326.26,151.78 L326.18,151.72 L326.09,151.66 L326.01,151.60 L325.93,151.54 L325.85,151.49 L325.76,151.43 L325.68,151.37 L325.59,151.32 L325.51,151.27 L325.42,151.21 L325.33,151.16 L325.25,151.11 L325.16,151.06 L325.07,151.01 L324.98,150.96 L324.89,150.91 L324.80,150.86 L324.71,150.81 L324.61,150.77 L324.52,150.72 L324.43,150.68 L324.33,150.64 L324.24,150.59 L324.14,150.55 L324.05,150.51 L323.95,150.47 L323.85,150.43 L323.76,150.39 L323.66,150.36 L323.56,150.32 L323.46,150.29 L323.36,150.25 L323.26,150.22 L323.15,150.19 L323.05,150.15 L322.95,150.12 L322.85,150.09 L322.74,150.07 L322.64,150.04 L322.53,150.01 L322.43,149.99 L322.32,149.96 L322.21,149.94 L322.11,149.92 L322.00,149.90 L321.89,149.88 L321.78,149.86 L321.67,149.84 L321.56,149.82 L321.45,149.81 L321.34,149.79 L321.23,149.78 L321.12,149.77 L321.01,149.76 L320.89,149.75 L320.78,149.74 L320.67,149.74 L320.55,149.73 L320.44,149.73 L320.32,149.72 L320.21,149.72 L320.09,149.72 L319.98,149.72 L319.86,149.72 L319.74,149.73 L319.63,149.73 L319.51,149.74 L319.39,149.75 L319.27,149.75 L319.15,149.76 L319.03,149.78 L318.92,149.79 L318.80,149.80 L318.68,149.82 L318.56,149.84 L318.44,149.86 L318.32,149.88 L318.20,149.90 L318.08,149.92 L317.96,149.95 L317.84,149.98 L317.71,150.01 L317.59,150.04 L317.47,150.07 L317.35,150.10 L317.23,150.13 L317.11,150.17 L316.99,150.21 L316.87,150.25 L316.75,150.29 L316.63,150.33 L316.51,150.38 L316.39,150.42 L316.27,150.47 L316.15,150.52 L316.03,150.57 L315.91,150.63 L315.79,150.68 L315.67,150.74 L315.55,150.80 L315.43,150.86 L315.31,150.92 L315.20,150.98 L315.08,151.05 L314.96,151.11 L314.85,151.18 L314.73,151.25 L314.62,151.33 L314.50,151.40 L314.39,151.48 L314.28,151.55 L314.16,151.63 L314.05,151.71 L313.94,151.80 L313.83,151.88 L313.72,151.97 L313.61,152.06 L313.51,152.15 L313.40,152.24 L313.29,152.33 L313.19,152.43 L313.08,152.52 L312.98,152.62 L312.88,152.72 L312.78,152.83 L312.68,152.93 L312.58,153.04 L312.49,153.14 L312.39,153.25 L312.30,153.36 L312.20,153.48 L312.11,153.59 L312.02,153.71 L311.93,153.82 L311.84,153.94 L311.76,154.06 L311.67,154.19 L311.59,154.31 L311.51,154.44 L311.43,154.56 L311.35,154.69 L311.28,154.82 L311.20,154.95 L311.13,155.08 L311.06,155.22 L310.99,155.35 L310.92,155.49 L310.86,155.63 L310.79,155.77 L310.73,155.91 L310.67,156.05 L310.62,156.19 L310.56,156.34 L310.51,156.48 L310.46,156.63 L310.41,156.78 L310.36,156.93 L310.31,157.08 L310.27,157.23 L310.23,157.38 L310.19,157.53 L310.16,157.68 L310.12,157.84 L310.09,157.99 L310.06,158.15 L310.04,158.31 L310.01,158.46 L309.99,158.62 L309.97,158.78 L309.96,158.94 L309.94,159.10 L309.93,159.26 L309.92,159.42 L309.92,159.58 L309.91,159.74 L309.91,159.90 L309.91,160.06 L309.91,160.23 L309.92,160.39 L309.93,160.55 L309.94,160.71 L309.95,160.88 L309.97,161.04 L309.99,161.20 L310.01,161.36 L310.04,161.52 L310.06,161.69 L310.09,161.85 L310.13,162.01 L310.16,162.17 L310.20,162.33 L310.24,162.49 L310.28,162.65 L310.33,162.81 L310.38,162.97 L310.43,163.12 L310.48,163.28 L310.53,163.44 L310.59,163.59 L310.65,163.75 L310.72,163.90 L310.78,164.05 L310.85,164.20 L310.92,164.35 L311.00,164.50 L311.07,164.65 L311.15,164.80 L311.23,164.94 L311.32,165.09 L311.40,165.23 L311.49,165.37 L311.58,165.51 L311.67,165.65 L311.77,165.79 L311.87,165.93 L311.97,166.06 L312.07,166.19 L312.17,166.32 L312.28,166.45 L312.39,166.58 L312.50,166.71 L312.61,166.83 L312.72,166.95 L312.84,167.07 L312.96,167.19Z" fill="#b8c41c"/>
<line x1="321.08" y1="157.23" x2="332.96" y2="169.11" stroke="#3a3a3a" stroke-width="0.9"/>
<circle cx="338.4" cy="157.6" r="0.7" fill="#bbb"/>
<circle cx="334.8" cy="171.2" r="1.9" fill="none" stroke="#d2d2d2" stroke-width="1.0" stroke-dasharray="1.1 0.55"/>
<circle cx="334.8" cy="171.2" r="1.5999999999999999" fill="none" stroke="#d2d2d2" stroke-width="0.7"/>
<path transform="translate(340.4,168.9) scale(1.0)" d="M0,0 h3.6 v0.8 h-0.7 v1.4 l0.7,1 v0.6 h-1.4 v1.6 l-0.4,0.6 l-0.4,-0.6 v-1.6 h-1.4 v-0.6 l0.7,-1 v-1.4 h-0.7z" fill="#d6d6d6"/>
<path d="M419.59,168.76 L419.46,168.62 L419.32,168.48 L419.19,168.33 L419.05,168.19 L418.92,168.04 L418.79,167.89 L418.67,167.74 L418.54,167.59 L418.42,167.44 L418.30,167.28 L418.18,167.12 L418.06,166.97 L417.95,166.81 L417.84,166.65 L417.73,166.48 L417.62,166.32 L417.51,166.15 L417.41,165.99 L417.31,165.82 L417.21,165.65 L417.11,165.48 L417.02,165.31 L416.93,165.13 L416.83,164.96 L416.75,164.78 L416.66,164.61 L416.58,164.43 L416.50,164.25 L416.42,164.07 L416.34,163.89 L416.27,163.71 L416.20,163.53 L416.13,163.34 L416.06,163.16 L416.00,162.97 L415.93,162.79 L415.87,162.60 L415.82,162.41 L415.76,162.22 L415.71,162.03 L415.66,161.84 L415.61,161.65 L415.57,161.46 L415.53,161.27 L415.49,161.08 L415.45,160.88 L415.42,160.69 L415.38,160.50 L415.36,160.30 L415.33,160.11 L415.30,159.91 L415.28,159.72 L415.26,159.52 L415.25,159.33 L415.23,159.13 L415.22,158.94 L415.21,158.74 L415.21,158.54 L415.20,158.35 L415.20,158.15 L415.20,157.95 L415.21,157.76 L415.21,157.56 L415.22,157.36 L415.23,157.17 L415.25,156.97 L415.26,156.78 L415.28,156.58 L415.30,156.39 L415.33,156.19 L415.36,156.00 L415.38,155.80 L415.42,155.61 L415.45,155.42 L415.49,155.22 L415.53,155.03 L415.57,154.84 L415.61,154.65 L415.66,154.46 L415.71,154.27 L415.76,154.08 L415.82,153.89 L415.87,153.70 L415.93,153.51 L416.00,153.33 L416.06,153.14 L416.13,152.96 L416.20,152.77 L416.27,152.59 L416.34,152.41 L416.42,152.23 L416.50,152.05 L416.58,151.87 L416.66,151.69 L416.75,151.52 L416.83,151.34 L416.93,151.17 L417.02,150.99 L417.11,150.82 L417.21,150.65 L417.31,150.48 L417.41,150.31 L417.51,150.15 L417.62,149.98 L417.73,149.82 L417.84,149.65 L417.95,149.49 L418.06,149.33 L418.18,149.18 L418.30,149.02 L418.42,148.86 L418.54,148.71 L418.67,148.56 L418.79,148.41 L418.92,148.26 L419.05,148.11 L419.19,147.97 L419.32,147.82 L419.46,147.68 L419.59,147.54 L419.73,147.41 L419.87,147.27 L420.02,147.14 L420.16,147.00 L420.31,146.87 L420.46,146.74 L420.61,146.62 L420.76,146.49 L420.91,146.37 L421.07,146.25 L421.23,146.13 L421.38,146.01 L421.54,145.90 L421.70,145.79 L421.87,145.68 L422.03,145.57 L422.20,145.46 L422.36,145.36 L422.53,145.26 L422.70,145.16 L422.87,145.06 L423.04,144.97 L423.22,144.88 L423.39,144.78 L423.57,144.70 L423.74,144.61 L423.92,144.53 L424.10,144.45 L424.28,144.37 L424.46,144.29 L424.64,144.22 L424.82,144.15 L425.01,144.08 L425.19,144.01 L425.38,143.95 L425.56,143.88 L425.75,143.82 L425.94,143.77 L426.13,143.71 L426.32,143.66 L426.51,143.61 L426.70,143.56 L426.89,143.52 L427.08,143.48 L427.27,143.44 L427.47,143.40 L427.66,143.37 L427.85,143.33 L428.05,143.31 L428.24,143.28 L428.44,143.25 L428.63,143.23 L428.83,143.21 L429.02,143.20 L429.22,143.18 L429.41,143.17 L429.61,143.16 L429.81,143.16 L430.00,143.15 L430.20,143.15 L430.40,143.15 L430.59,143.16 L430.79,143.16 L430.99,143.17 L431.18,143.18 L431.38,143.20 L431.57,143.21 L431.77,143.23 L431.96,143.25 L432.16,143.28 L432.35,143.31 L432.55,143.33 L432.74,143.37 L432.93,143.40 L433.13,143.44 L433.32,143.48 L433.51,143.52 L433.70,143.56 L433.89,143.61 L434.08,143.66 L434.27,143.71 L434.46,143.77 L434.65,143.82 L434.84,143.88 L435.02,143.95 L435.21,144.01 L435.39,144.08 L435.58,144.15 L435.76,144.22 L435.94,144.29 L436.12,144.37 L436.30,144.45 L436.48,144.53 L436.66,144.61 L436.83,144.70 L437.01,144.78 L437.18,144.88 L437.36,144.97 L437.53,145.06 L437.70,145.16 L437.87,145.26 L438.04,145.36 L438.20,145.46 L438.37,145.57 L438.53,145.68 L438.70,145.79 L438.86,145.90 L439.02,146.01 L439.17,146.13 L439.33,146.25 L439.49,146.37 L439.64,146.49 L439.79,146.62 L439.94,146.74 L440.09,146.87 L440.24,147.00 L440.38,147.14 L440.53,147.27 L440.67,147.41 L440.81,147.54 L440.94,147.68 L441.08,147.82 L441.21,147.97 L441.35,148.11 L441.48,148.26 L441.61,148.41 L441.73,148.56 L441.86,148.71 L441.98,148.86 L442.10,149.02 L442.22,149.18 L442.34,149.33 L442.45,149.49 L442.56,149.65 L442.67,149.82 L442.78,149.98 L442.89,150.15 L442.99,150.31 L443.09,150.48 L443.19,150.65 L443.29,150.82 L443.38,150.99 L443.47,151.17 L443.57,151.34 L443.65,151.52 L443.74,151.69 L443.82,151.87 L443.90,152.05 L443.98,152.23 L444.06,152.41 L444.13,152.59 L444.20,152.77 L444.27,152.96 L444.34,153.14 L444.40,153.33 L444.47,153.51 L444.53,153.70 L444.58,153.89 L444.64,154.08 L444.69,154.27 L444.74,154.46 L444.79,154.65 L444.83,154.84 L444.87,155.03 L444.91,155.22 L444.95,155.42 L444.98,155.61 L445.02,155.80 L445.04,156.00 L445.07,156.19 L445.10,156.39 L445.12,156.58 L445.14,156.78 L445.15,156.97 L445.17,157.17 L445.18,157.36 L445.19,157.56 L445.19,157.76 L445.20,157.95 L445.20,158.15 L445.20,158.35 L445.19,158.54 L445.19,158.74 L445.18,158.94 L445.17,159.13 L445.15,159.33 L445.14,159.52 L445.12,159.72 L445.10,159.91 L445.07,160.11 L445.04,160.30 L445.02,160.50 L444.98,160.69 L444.95,160.88 L444.91,161.08 L444.87,161.27 L444.83,161.46 L444.79,161.65 L444.74,161.84 L444.69,162.03 L444.64,162.22 L444.58,162.41 L444.53,162.60 L444.47,162.79 L444.40,162.97 L444.34,163.16 L444.27,163.34 L444.20,163.53 L444.13,163.71 L444.06,163.89 L443.98,164.07 L443.90,164.25 L443.82,164.43 L443.74,164.61 L443.65,164.78 L443.57,164.96 L443.47,165.13 L443.38,165.31 L443.29,165.48 L443.19,165.65 L443.09,165.82 L442.99,165.99 L442.89,166.15 L442.78,166.32 L442.67,166.48 L442.56,166.65 L442.45,166.81 L442.34,166.97 L442.22,167.12 L442.10,167.28 L441.98,167.44 L441.86,167.59 L441.73,167.74 L441.61,167.89 L441.48,168.04 L441.35,168.19 L441.21,168.33 L441.08,168.48 L440.94,168.62 L440.81,168.76 L437.12,165.07 L437.18,164.95 L437.25,164.84 L437.31,164.72 L437.37,164.61 L437.43,164.49 L437.49,164.37 L437.54,164.26 L437.60,164.14 L437.65,164.02 L437.70,163.90 L437.75,163.79 L437.80,163.67 L437.84,163.55 L437.89,163.43 L437.93,163.31 L437.97,163.20 L438.01,163.08 L438.05,162.96 L438.08,162.84 L438.12,162.72 L438.15,162.60 L438.18,162.48 L438.21,162.37 L438.24,162.25 L438.27,162.13 L438.29,162.01 L438.32,161.89 L438.34,161.77 L438.36,161.66 L438.38,161.54 L438.40,161.42 L438.42,161.30 L438.43,161.19 L438.44,161.07 L438.46,160.95 L438.47,160.84 L438.48,160.72 L438.49,160.60 L438.49,160.49 L438.50,160.37 L438.50,160.26 L438.51,160.14 L438.51,160.03 L438.51,159.92 L438.51,159.80 L438.51,159.69 L438.50,159.58 L438.50,159.46 L438.49,159.35 L438.49,159.24 L438.48,159.13 L438.47,159.02 L438.46,158.91 L438.45,158.80 L438.44,158.69 L438.42,158.58 L438.41,158.47 L438.39,158.36 L438.37,158.26 L438.36,158.15 L438.34,158.04 L438.32,157.94 L438.29,157.83 L438.27,157.73 L438.25,157.62 L438.22,157.52 L438.20,157.42 L438.17,157.31 L438.14,157.21 L438.11,157.11 L438.09,157.01 L438.05,156.91 L438.02,156.81 L437.99,156.71 L437.96,156.61 L437.92,156.51 L437.89,156.41 L437.85,156.31 L437.81,156.22 L437.78,156.12 L437.74,156.02 L437.70,155.93 L437.66,155.83 L437.61,155.74 L437.57,155.65 L437.53,155.55 L437.48,155.46 L437.44,155.37 L437.39,155.28 L437.35,155.19 L437.30,155.10 L437.25,155.01 L437.20,154.92 L437.15,154.83 L437.10,154.75 L437.05,154.66 L437.00,154.57 L436.94,154.49 L436.89,154.40 L436.83,154.32 L436.78,154.24 L436.72,154.15 L436.67,154.07 L436.61,153.99 L436.55,153.91 L436.49,153.83 L436.43,153.75 L436.37,153.67 L436.31,153.59 L436.25,153.51 L436.18,153.43 L436.12,153.36 L436.05,153.28 L435.99,153.21 L435.92,153.13 L435.86,153.06 L435.79,152.98 L435.72,152.91 L435.65,152.84 L435.58,152.77 L435.51,152.70 L435.44,152.63 L435.37,152.56 L435.30,152.49 L435.22,152.42 L435.15,152.35 L435.08,152.29 L435.00,152.22 L434.93,152.16 L434.85,152.09 L434.77,152.03 L434.69,151.96 L434.62,151.90 L434.54,151.84 L434.46,151.78 L434.38,151.72 L434.29,151.66 L434.21,151.60 L434.13,151.54 L434.05,151.49 L433.96,151.43 L433.88,151.37 L433.79,151.32 L433.71,151.27 L433.62,151.21 L433.53,151.16 L433.45,151.11 L433.36,151.06 L433.27,151.01 L433.18,150.96 L433.09,150.91 L433.00,150.86 L432.91,150.81 L432.81,150.77 L432.72,150.72 L432.63,150.68 L432.53,150.64 L432.44,150.59 L432.34,150.55 L432.25,150.51 L432.15,150.47 L432.05,150.43 L431.96,150.39 L431.86,150.36 L431.76,150.32 L431.66,150.29 L431.56,150.25 L431.46,150.22 L431.35,150.19 L431.25,150.15 L431.15,150.12 L431.05,150.09 L430.94,150.07 L430.84,150.04 L430.73,150.01 L430.63,149.99 L430.52,149.96 L430.41,149.94 L430.31,149.92 L430.20,149.90 L430.09,149.88 L429.98,149.86 L429.87,149.84 L429.76,149.82 L429.65,149.81 L429.54,149.79 L429.43,149.78 L429.32,149.77 L429.21,149.76 L429.09,149.75 L428.98,149.74 L428.87,149.74 L428.75,149.73 L428.64,149.73 L428.52,149.72 L428.41,149.72 L428.29,149.72 L428.18,149.72 L428.06,149.72 L427.94,149.73 L427.83,149.73 L427.71,149.74 L427.59,149.75 L427.47,149.75 L427.35,149.76 L427.23,149.78 L427.12,149.79 L427.00,149.80 L426.88,149.82 L426.76,149.84 L426.64,149.86 L426.52,149.88 L426.40,149.90 L426.28,149.92 L426.16,149.95 L426.04,149.98 L425.91,150.01 L425.79,150.04 L425.67,150.07 L425.55,150.10 L425.43,150.13 L425.31,150.17 L425.19,150.21 L425.07,150.25 L424.95,150.29 L424.83,150.33 L424.71,150.38 L424.59,150.42 L424.47,150.47 L424.35,150.52 L424.23,150.57 L424.11,150.63 L423.99,150.68 L423.87,150.74 L423.75,150.80 L423.63,150.86 L423.51,150.92 L423.40,150.98 L423.28,151.05 L423.16,151.11 L423.05,151.18 L422.93,151.25 L422.82,151.33 L422.70,151.40 L422.59,151.48 L422.48,151.55 L422.36,151.63 L422.25,151.71 L422.14,151.80 L422.03,151.88 L421.92,151.97 L421.81,152.06 L421.71,152.15 L421.60,152.24 L421.49,152.33 L421.39,152.43 L421.28,152.52 L421.18,152.62 L421.08,152.72 L420.98,152.83 L420.88,152.93 L420.78,153.04 L420.69,153.14 L420.59,153.25 L420.50,153.36 L420.40,153.48 L420.31,153.59 L420.22,153.71 L420.13,153.82 L420.04,153.94 L419.96,154.06 L419.87,154.19 L419.79,154.31 L419.71,154.44 L419.63,154.56 L419.55,154.69 L419.48,154.82 L419.40,154.95 L419.33,155.08 L419.26,155.22 L419.19,155.35 L419.12,155.49 L419.06,155.63 L418.99,155.77 L418.93,155.91 L418.87,156.05 L418.82,156.19 L418.76,156.34 L418.71,156.48 L418.66,156.63 L418.61,156.78 L418.56,156.93 L418.51,157.08 L418.47,157.23 L418.43,157.38 L418.39,157.53 L418.36,157.68 L418.32,157.84 L418.29,157.99 L418.26,158.15 L418.24,158.31 L418.21,158.46 L418.19,158.62 L418.17,158.78 L418.16,158.94 L418.14,159.10 L418.13,159.26 L418.12,159.42 L418.12,159.58 L418.11,159.74 L418.11,159.90 L418.11,160.06 L418.11,160.23 L418.12,160.39 L418.13,160.55 L418.14,160.71 L418.15,160.88 L418.17,161.04 L418.19,161.20 L418.21,161.36 L418.24,161.52 L418.26,161.69 L418.29,161.85 L418.33,162.01 L418.36,162.17 L418.40,162.33 L418.44,162.49 L418.48,162.65 L418.53,162.81 L418.58,162.97 L418.63,163.12 L418.68,163.28 L418.73,163.44 L418.79,163.59 L418.85,163.75 L418.92,163.90 L418.98,164.05 L419.05,164.20 L419.12,164.35 L419.20,164.50 L419.27,164.65 L419.35,164.80 L419.43,164.94 L419.52,165.09 L419.60,165.23 L419.69,165.37 L419.78,165.51 L419.87,165.65 L419.97,165.79 L420.07,165.93 L420.17,166.06 L420.27,166.19 L420.37,166.32 L420.48,166.45 L420.59,166.58 L420.70,166.71 L420.81,166.83 L420.92,166.95 L421.04,167.07 L421.16,167.19Z" fill="#b8c41c"/>
<line x1="429.28" y1="157.23" x2="441.16" y2="169.11" stroke="#3a3a3a" stroke-width="0.9"/>
<circle cx="418" cy="169.6" r="0.7" fill="#bbb"/>
<circle cx="443.0" cy="171.2" r="1.9" fill="none" stroke="#d2d2d2" stroke-width="1.0" stroke-dasharray="1.1 0.55"/>
<circle cx="443.0" cy="171.2" r="1.5999999999999999" fill="none" stroke="#d2d2d2" stroke-width="0.7"/>
<path transform="translate(448.6,168.9) scale(1.0)" d="M0,0 h3.6 v0.8 h-0.7 v1.4 l0.7,1 v0.6 h-1.4 v1.6 l-0.4,0.6 l-0.4,-0.6 v-1.6 h-1.4 v-0.6 l0.7,-1 v-1.4 h-0.7z" fill="#d6d6d6"/>
<path d="M81.2,280.1 H86.6 L83.9,283.0Z" fill="#1c2a4e"/>
<path d="M181.40,278.80 L184.10,276.00 L186.80,278.80Z M181.40,279.80 L184.10,282.80 L186.80,279.80Z" fill="#cbcbcb"/>
<path d="M240.10,290.40 L242.80,287.60 L245.50,290.40Z M240.10,291.40 L242.80,294.40 L245.50,291.40Z" fill="#cbcbcb"/>
<path d="M377.30,278.80 L380.00,276.00 L382.70,278.80Z M377.30,279.80 L380.00,282.80 L382.70,279.80Z" fill="#cbcbcb"/>
<path d="M514.10,278.80 L516.80,276.00 L519.50,278.80Z M514.10,279.80 L516.80,282.80 L519.50,279.80Z" fill="#cbcbcb"/>
<circle cx="574.6" cy="313.50" r="2.3" fill="none" stroke="#444" stroke-width="1.3"/>
<circle cx="570.5" cy="317.50" r="1.3" fill="none" stroke="#444" stroke-width="1.0"/>
<circle cx="574.6" cy="337.33" r="2.3" fill="none" stroke="#444" stroke-width="1.3"/>
<circle cx="570.5" cy="341.33" r="1.3" fill="none" stroke="#444" stroke-width="1.0"/>
<circle cx="574.6" cy="361.16" r="2.3" fill="none" stroke="#444" stroke-width="1.3"/>
<circle cx="570.5" cy="365.16" r="1.3" fill="none" stroke="#444" stroke-width="1.0"/>
<circle cx="574.6" cy="384.99" r="2.3" fill="none" stroke="#444" stroke-width="1.3"/>
<circle cx="570.5" cy="388.99" r="1.3" fill="none" stroke="#444" stroke-width="1.0"/>
<circle cx="574.6" cy="408.82" r="2.3" fill="none" stroke="#444" stroke-width="1.3"/>
<circle cx="570.5" cy="412.82" r="1.3" fill="none" stroke="#444" stroke-width="1.0"/>
<circle cx="574.6" cy="432.65" r="2.3" fill="none" stroke="#444" stroke-width="1.3"/>
<circle cx="570.5" cy="436.65" r="1.3" fill="none" stroke="#444" stroke-width="1.0"/>
<circle cx="574.6" cy="456.48" r="2.3" fill="none" stroke="#444" stroke-width="1.3"/>
<circle cx="570.5" cy="460.48" r="1.3" fill="none" stroke="#444" stroke-width="1.0"/>
</svg>
</body></html>
